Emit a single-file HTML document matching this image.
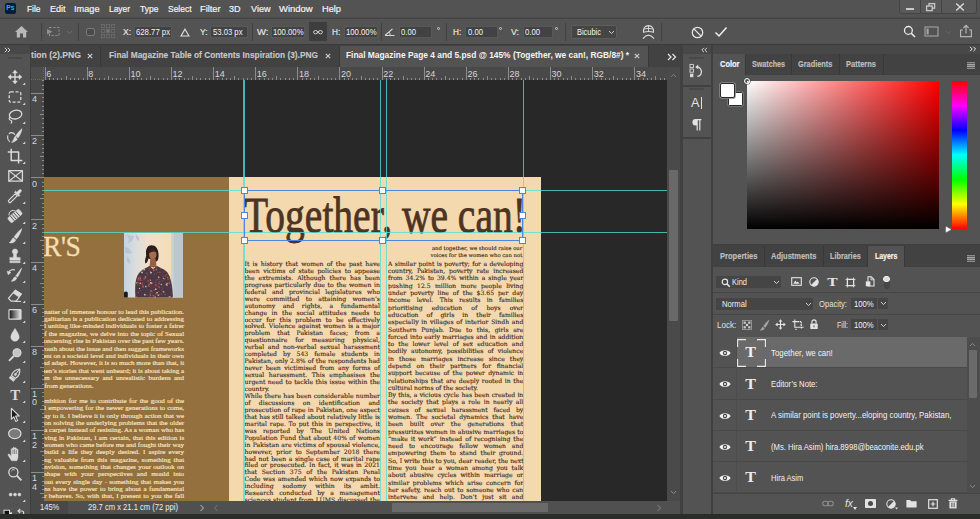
<!DOCTYPE html>
<html><head><meta charset="utf-8"><title>Photoshop</title>
<style>*{box-sizing:border-box;margin:0;padding:0}
html,body{width:980px;height:519px;overflow:hidden;background:#535353;font-family:"Liberation Sans",sans-serif;color:#e6e6e6}
.a{position:absolute}
#root{position:relative;width:980px;height:519px;overflow:hidden;background:#535353}
#canvas{left:44px;top:80px;width:623px;height:421px;background:#282828;overflow:hidden}
.g{position:absolute;background:rgba(78,224,218,0.78)}
.ser{font-family:"Liberation Serif",serif}
.bl{position:absolute;white-space:nowrap;font-family:"Liberation Serif",serif;font-weight:bold;text-align:justify;text-align-last:justify}
.hd{position:absolute;width:7px;height:7px;background:#fff;border:1px solid #4a86e8}
</style></head><body>
<div id="root">
<div class="a" style="left:0;top:0;width:980px;height:19px;background:#535353;border-bottom:1.2px solid #434343"></div><div class="a" style="left:0;top:16.6px;width:980px;height:1.2px;background:#4c4c4c"></div>
<div class="a" style="left:4.7px;top:3.4px;width:11.2px;height:10.6px;background:#001e36;border-radius:2.2px;font-size:6.8px;font-weight:bold;color:#31a8ff;line-height:10.6px;text-align:center;letter-spacing:-0.2px">Ps</div>
<span class="a" style="left:27px;top:2.65px;font-size:9.6px;line-height:12.5px;font-weight:normal;color:#f4f4f4;font-family:'Liberation Sans',sans-serif;white-space:nowrap;transform-origin:0 50%;transform:scaleX(0.873);-webkit-text-stroke:0.2px #f4f4f4;">File</span>
<span class="a" style="left:50px;top:2.65px;font-size:9.6px;line-height:12.5px;font-weight:normal;color:#f4f4f4;font-family:'Liberation Sans',sans-serif;white-space:nowrap;transform-origin:0 50%;transform:scaleX(0.938);-webkit-text-stroke:0.2px #f4f4f4;">Edit</span>
<span class="a" style="left:74px;top:2.65px;font-size:9.6px;line-height:12.5px;font-weight:normal;color:#f4f4f4;font-family:'Liberation Sans',sans-serif;white-space:nowrap;transform-origin:0 50%;transform:scaleX(0.956);-webkit-text-stroke:0.2px #f4f4f4;">Image</span>
<span class="a" style="left:109px;top:2.65px;font-size:9.6px;line-height:12.5px;font-weight:normal;color:#f4f4f4;font-family:'Liberation Sans',sans-serif;white-space:nowrap;transform-origin:0 50%;transform:scaleX(0.875);-webkit-text-stroke:0.2px #f4f4f4;">Layer</span>
<span class="a" style="left:139.5px;top:2.65px;font-size:9.6px;line-height:12.5px;font-weight:normal;color:#f4f4f4;font-family:'Liberation Sans',sans-serif;white-space:nowrap;transform-origin:0 50%;transform:scaleX(0.889);-webkit-text-stroke:0.2px #f4f4f4;">Type</span>
<span class="a" style="left:167.5px;top:2.65px;font-size:9.6px;line-height:12.5px;font-weight:normal;color:#f4f4f4;font-family:'Liberation Sans',sans-serif;white-space:nowrap;transform-origin:0 50%;transform:scaleX(0.881);-webkit-text-stroke:0.2px #f4f4f4;">Select</span>
<span class="a" style="left:200px;top:2.65px;font-size:9.6px;line-height:12.5px;font-weight:normal;color:#f4f4f4;font-family:'Liberation Sans',sans-serif;white-space:nowrap;transform-origin:0 50%;transform:scaleX(0.962);-webkit-text-stroke:0.2px #f4f4f4;">Filter</span>
<span class="a" style="left:229px;top:2.65px;font-size:9.6px;line-height:12.5px;font-weight:normal;color:#f4f4f4;font-family:'Liberation Sans',sans-serif;white-space:nowrap;transform-origin:0 50%;transform:scaleX(0.938);-webkit-text-stroke:0.2px #f4f4f4;">3D</span>
<span class="a" style="left:250.5px;top:2.65px;font-size:9.6px;line-height:12.5px;font-weight:normal;color:#f4f4f4;font-family:'Liberation Sans',sans-serif;white-space:nowrap;transform-origin:0 50%;transform:scaleX(0.946);-webkit-text-stroke:0.2px #f4f4f4;">View</span>
<span class="a" style="left:278.8px;top:2.65px;font-size:9.6px;line-height:12.5px;font-weight:normal;color:#f4f4f4;font-family:'Liberation Sans',sans-serif;white-space:nowrap;transform-origin:0 50%;transform:scaleX(0.988);-webkit-text-stroke:0.2px #f4f4f4;">Window</span>
<span class="a" style="left:321.5px;top:2.65px;font-size:9.6px;line-height:12.5px;font-weight:normal;color:#f4f4f4;font-family:'Liberation Sans',sans-serif;white-space:nowrap;transform-origin:0 50%;transform:scaleX(0.963);-webkit-text-stroke:0.2px #f4f4f4;">Help</span>
<div class="a" style="left:899px;top:-1px;width:78px;height:14.5px;background:#595959;border:1px solid #444;border-radius:0 0 3px 3px"></div>
<div class="a" style="left:920px;top:0;width:1px;height:13px;background:#444"></div><div class="a" style="left:941px;top:0;width:1px;height:13px;background:#444"></div>
<div class="a" style="left:906px;top:8px;width:8px;height:2.3px;background:#c9c9c9"></div>
<svg class="a" style="left:924px;top:1px" width="14" height="12" viewBox="0 0 14 12"><rect x="5" y="2.6" width="5.6" height="4.6" fill="none" stroke="#c9c9c9" stroke-width="1.3"/><rect x="2.6" y="5" width="5.6" height="4.6" fill="#595959" stroke="#c9c9c9" stroke-width="1.3"/></svg>
<svg class="a" style="left:954px;top:2px" width="12" height="10" viewBox="0 0 12 10"><path d="M2.2 1.6 L9.8 8.4 M9.8 1.6 L2.2 8.4" stroke="#dcdcdc" stroke-width="1.4" fill="none"/></svg>
<div class="a" style="left:0;top:19px;width:980px;height:26px;background:#535353;border-bottom:1.5px solid #3a3a3a"></div>
<svg class="a" style="left:14px;top:25px" width="15" height="14" viewBox="0 0 15 14"><path d="M7.5 1 L14 7 H12.2 V12.6 H9 V8.6 H6 V12.6 H2.8 V7 H1 Z" fill="#b9b9b9"/></svg>
<div class="a" style="left:41px;top:23px;width:1px;height:18px;background:#404040"></div>
<svg class="a" style="left:46px;top:26px" width="15" height="12" viewBox="0 0 15 12"><rect x="3.5" y="1.5" width="9.5" height="8" fill="none" stroke="#8f8f8f" stroke-width="1.1" stroke-dasharray="2.2 1.6"/><path d="M1 3 L6.5 5.7 L1 8.4 Z" fill="#8f8f8f"/></svg>
<svg class="a" style="left:66px;top:30px" width="7" height="5" viewBox="0 0 7 5"><path d="M1 1 L3.5 3.6 L6 1" fill="none" stroke="#6c6c6c" stroke-width="1"/></svg>
<div class="a" style="left:78px;top:23px;width:1px;height:18px;background:#404040"></div>
<div class="a" style="left:86px;top:27.5px;width:8.5px;height:8.5px;border:1px solid #7a7a7a;border-radius:2px;background:#4b4b4b"></div>
<svg class="a" style="left:100px;top:23px" width="17" height="17" viewBox="0 0 17 17"><rect x="1.5" y="1.5" width="3.2" height="3.2" fill="none" stroke="#6d6d6d" stroke-width="0.8"/><rect x="6.5" y="1.5" width="3.2" height="3.2" fill="none" stroke="#6d6d6d" stroke-width="0.8"/><rect x="11.5" y="1.5" width="3.2" height="3.2" fill="none" stroke="#6d6d6d" stroke-width="0.8"/><rect x="1.5" y="6.5" width="3.2" height="3.2" fill="none" stroke="#6d6d6d" stroke-width="0.8"/><rect x="6.5" y="6.5" width="3.2" height="3.2" fill="#777" stroke="#6d6d6d" stroke-width="0.8"/><rect x="11.5" y="6.5" width="3.2" height="3.2" fill="none" stroke="#6d6d6d" stroke-width="0.8"/><rect x="1.5" y="11.5" width="3.2" height="3.2" fill="none" stroke="#6d6d6d" stroke-width="0.8"/><rect x="6.5" y="11.5" width="3.2" height="3.2" fill="none" stroke="#6d6d6d" stroke-width="0.8"/><rect x="11.5" y="11.5" width="3.2" height="3.2" fill="none" stroke="#6d6d6d" stroke-width="0.8"/></svg>
<span class="a" style="left:122.8px;top:25.90px;font-size:9.4px;line-height:12.2px;font-weight:normal;color:#e4e4e4;font-family:'Liberation Sans',sans-serif;white-space:nowrap;transform-origin:0 50%;transform:scaleX(0.903);-webkit-text-stroke:0.18px #e4e4e4;">X:</span>
<div class="a" style="left:134px;top:26px;width:38px;height:12px;background:#424242;border:1px solid #585858"></div>
<span class="a" style="left:136.3px;top:26.10px;font-size:9.4px;line-height:12.2px;font-weight:normal;color:#f4f4f4;font-family:'Liberation Sans',sans-serif;white-space:nowrap;transform-origin:0 50%;transform:scaleX(0.826);">628.77 px</span>
<svg class="a" style="left:180px;top:27.5px" width="10" height="9" viewBox="0 0 10 9"><path d="M5 1.2 L9 8 H1 Z" fill="none" stroke="#e0e0e0" stroke-width="1.1"/></svg>
<span class="a" style="left:199.6px;top:25.90px;font-size:9.4px;line-height:12.2px;font-weight:normal;color:#e4e4e4;font-family:'Liberation Sans',sans-serif;white-space:nowrap;transform-origin:0 50%;transform:scaleX(0.911);-webkit-text-stroke:0.18px #e4e4e4;">Y:</span>
<div class="a" style="left:210px;top:26px;width:38px;height:12px;background:#424242;border:1px solid #585858"></div>
<span class="a" style="left:212.5px;top:26.10px;font-size:9.4px;line-height:12.2px;font-weight:normal;color:#f4f4f4;font-family:'Liberation Sans',sans-serif;white-space:nowrap;transform-origin:0 50%;transform:scaleX(0.820);">53.03 px</span>
<div class="a" style="left:252px;top:23px;width:1px;height:18px;background:#404040"></div>
<span class="a" style="left:256.8px;top:25.90px;font-size:9.4px;line-height:12.2px;font-weight:normal;color:#e4e4e4;font-family:'Liberation Sans',sans-serif;white-space:nowrap;transform-origin:0 50%;transform:scaleX(1.010);-webkit-text-stroke:0.18px #e4e4e4;">W:</span>
<div class="a" style="left:271px;top:26px;width:34px;height:12px;background:#424242;border:1px solid #585858"></div>
<span class="a" style="left:273.2px;top:26.10px;font-size:9.4px;line-height:12.2px;font-weight:normal;color:#f4f4f4;font-family:'Liberation Sans',sans-serif;white-space:nowrap;transform-origin:0 50%;transform:scaleX(0.824);">100.00%</span>
<div class="a" style="left:309px;top:22px;width:17.5px;height:19px;background:#3d3d3d"></div>
<svg class="a" style="left:311px;top:28px" width="14" height="8" viewBox="0 0 14 8"><ellipse cx="4.6" cy="4.2" rx="2" ry="1.7" fill="none" stroke="#cfcfcf" stroke-width="1"/><ellipse cx="9.4" cy="4.2" rx="2" ry="1.7" fill="none" stroke="#cfcfcf" stroke-width="1"/><path d="M5.8 4.2 H8.2" stroke="#cfcfcf" stroke-width="1"/></svg>
<span class="a" style="left:332px;top:25.90px;font-size:9.4px;line-height:12.2px;font-weight:normal;color:#e4e4e4;font-family:'Liberation Sans',sans-serif;white-space:nowrap;transform-origin:0 50%;transform:scaleX(0.875);-webkit-text-stroke:0.18px #e4e4e4;">H:</span>
<div class="a" style="left:343.5px;top:26px;width:34.0px;height:12px;background:#424242;border:1px solid #585858"></div>
<span class="a" style="left:346px;top:26.10px;font-size:9.4px;line-height:12.2px;font-weight:normal;color:#f4f4f4;font-family:'Liberation Sans',sans-serif;white-space:nowrap;transform-origin:0 50%;transform:scaleX(0.824);">100.00%</span>
<div class="a" style="left:381px;top:23px;width:1px;height:18px;background:#404040"></div>
<svg class="a" style="left:384px;top:27px" width="12" height="10" viewBox="0 0 12 10"><path d="M1 8.5 H10.5 M1 8.5 L8.5 1.8" fill="none" stroke="#d8d8d8" stroke-width="1.1"/><path d="M6.2 8.5 A5 5 0 0 0 4.9 5" fill="none" stroke="#d8d8d8" stroke-width="1"/></svg>
<div class="a" style="left:398.5px;top:26px;width:33.5px;height:12px;background:#424242;border:1px solid #585858"></div>
<span class="a" style="left:401px;top:26.10px;font-size:9.4px;line-height:12.2px;font-weight:normal;color:#f4f4f4;font-family:'Liberation Sans',sans-serif;white-space:nowrap;transform-origin:0 50%;transform:scaleX(0.822);">0.00</span>
<div class="a" style="left:436.5px;top:26.5px;width:3.4px;height:3.4px;border:0.8px solid #cfcfcf;border-radius:50%"></div>
<div class="a" style="left:446px;top:23px;width:1px;height:18px;background:#404040"></div>
<span class="a" style="left:453.3px;top:25.90px;font-size:9.4px;line-height:12.2px;font-weight:normal;color:#e4e4e4;font-family:'Liberation Sans',sans-serif;white-space:nowrap;transform-origin:0 50%;transform:scaleX(0.875);-webkit-text-stroke:0.18px #e4e4e4;">H:</span>
<div class="a" style="left:464.5px;top:26px;width:33.0px;height:12px;background:#424242;border:1px solid #585858"></div>
<span class="a" style="left:467.5px;top:26.10px;font-size:9.4px;line-height:12.2px;font-weight:normal;color:#f4f4f4;font-family:'Liberation Sans',sans-serif;white-space:nowrap;transform-origin:0 50%;transform:scaleX(0.822);">0.00</span>
<div class="a" style="left:499px;top:26.5px;width:3.4px;height:3.4px;border:0.8px solid #cfcfcf;border-radius:50%"></div>
<span class="a" style="left:511.2px;top:25.90px;font-size:9.4px;line-height:12.2px;font-weight:normal;color:#e4e4e4;font-family:'Liberation Sans',sans-serif;white-space:nowrap;transform-origin:0 50%;transform:scaleX(0.940);-webkit-text-stroke:0.18px #e4e4e4;">V:</span>
<div class="a" style="left:522.5px;top:26px;width:30.0px;height:12px;background:#424242;border:1px solid #585858"></div>
<span class="a" style="left:525px;top:26.10px;font-size:9.4px;line-height:12.2px;font-weight:normal;color:#f4f4f4;font-family:'Liberation Sans',sans-serif;white-space:nowrap;transform-origin:0 50%;transform:scaleX(0.822);">0.00</span>
<div class="a" style="left:555px;top:26.5px;width:3.4px;height:3.4px;border:0.8px solid #cfcfcf;border-radius:50%"></div>
<div class="a" style="left:565px;top:23px;width:1px;height:18px;background:#404040"></div>
<div class="a" style="left:571px;top:25.2px;width:46px;height:13.4px;background:#454545;border:1px solid #5c5c5c;border-radius:2px"></div>
<span class="a" style="left:576.5px;top:26.10px;font-size:9.4px;line-height:12.2px;font-weight:normal;color:#f4f4f4;font-family:'Liberation Sans',sans-serif;white-space:nowrap;transform-origin:0 50%;transform:scaleX(0.794);">Bicubic</span>
<svg class="a" style="left:608px;top:30px" width="7" height="5" viewBox="0 0 7 5"><path d="M1 1 L3.5 3.6 L6 1" fill="none" stroke="#cfcfcf" stroke-width="1"/></svg>
<svg class="a" style="left:641px;top:24px" width="15" height="16" viewBox="0 0 15 16"><path d="M2.6 8.2 C2 4.4 4 1.6 7.5 1.6 C11 1.6 13 4.4 12.4 8.2 Q7.5 6.8 2.6 8.2 Z" fill="none" stroke="#dcdcdc" stroke-width="1.1"/><path d="M7.5 1.8 V7.4 M2.8 5 Q7.5 3.8 12.2 5" fill="none" stroke="#dcdcdc" stroke-width="0.9"/><path d="M2 14.6 Q7.5 7.8 13 14.6" fill="none" stroke="#dcdcdc" stroke-width="1.2"/></svg>
<div class="a" style="left:661px;top:23px;width:1px;height:18px;background:#404040"></div>
<svg class="a" style="left:691px;top:25.5px" width="13" height="13" viewBox="0 0 13 13"><circle cx="6.5" cy="6.5" r="5.2" fill="none" stroke="#e6e6e6" stroke-width="1.3"/><path d="M2.9 2.9 L10.1 10.1" stroke="#e6e6e6" stroke-width="1.3"/></svg>
<svg class="a" style="left:714px;top:26px" width="14" height="12" viewBox="0 0 14 12"><path d="M1.5 6.5 L5 10 L12.5 1.5" fill="none" stroke="#f0f0f0" stroke-width="1.5"/></svg>
<svg class="a" style="left:903px;top:25px" width="13" height="13" viewBox="0 0 13 13"><circle cx="5.4" cy="5.4" r="3.9" fill="none" stroke="#ececec" stroke-width="1.3"/><path d="M8.3 8.3 L12 12" stroke="#ececec" stroke-width="1.6"/></svg>
<svg class="a" style="left:924px;top:26px" width="15" height="11" viewBox="0 0 15 11"><rect x="1" y="1" width="13" height="9" fill="none" stroke="#a4a4a4" stroke-width="1.1"/><rect x="2.5" y="2.6" width="2.2" height="5.8" fill="#a4a4a4"/></svg>
<svg class="a" style="left:945px;top:30px" width="7" height="5" viewBox="0 0 7 5"><path d="M1 1 L3.5 3.6 L6 1" fill="none" stroke="#656565" stroke-width="1"/></svg>
<svg class="a" style="left:959px;top:24px" width="14" height="14" viewBox="0 0 14 14"><path d="M4 6 H1.6 V12.6 H12.4 V6 H10" fill="none" stroke="#b4b4b4" stroke-width="1.2"/><path d="M7 9.5 V1.6 M4.4 4 L7 1.4 L9.6 4" fill="none" stroke="#b4b4b4" stroke-width="1.2"/></svg>
<div class="a" style="left:30px;top:45px;width:650px;height:21.5px;background:#424242"></div>
<div class="a" style="left:339px;top:45.5px;width:308.8px;height:21px;background:#535353"></div>
<div class="a" style="left:100px;top:45.5px;width:1px;height:21px;background:#383838"></div>
<div class="a" style="left:338.5px;top:45.5px;width:1px;height:21px;background:#383838"></div>
<div class="a" style="left:647.8px;top:45.5px;width:1px;height:21px;background:#383838"></div>
<span class="a" style="left:31px;top:49.25px;font-size:9.6px;line-height:12.5px;font-weight:bold;color:#c6c6c6;font-family:'Liberation Sans',sans-serif;white-space:nowrap;transform-origin:0 50%;transform:scaleX(0.902);-webkit-text-stroke:0.15px #c6c6c6;">tion (2).PNG</span>
<span class="a" style="left:109px;top:49.25px;font-size:9.6px;line-height:12.5px;font-weight:bold;color:#c6c6c6;font-family:'Liberation Sans',sans-serif;white-space:nowrap;transform-origin:0 50%;transform:scaleX(0.868);-webkit-text-stroke:0.15px #c6c6c6;">Final Magazine Table of Contents Inspiration (3).PNG</span>
<span class="a" style="left:346px;top:49.25px;font-size:9.6px;line-height:12.5px;font-weight:bold;color:#f4f4f4;font-family:'Liberation Sans',sans-serif;white-space:nowrap;transform-origin:0 50%;transform:scaleX(0.873);">Final Magazine Page 4 and 5.psd @ 145% (Together, we can!, RGB/8#) *</span>
<svg class="a" style="left:87px;top:53.2px" width="6" height="6" viewBox="0 0 6 6"><path d="M0.8 0.8 L5.2 5.2 M5.2 0.8 L0.8 5.2" stroke="#d0d0d0" stroke-width="1.1"/></svg>
<svg class="a" style="left:324.5px;top:53.2px" width="6" height="6" viewBox="0 0 6 6"><path d="M0.8 0.8 L5.2 5.2 M5.2 0.8 L0.8 5.2" stroke="#d0d0d0" stroke-width="1.1"/></svg>
<svg class="a" style="left:633.5px;top:53.2px" width="6" height="6" viewBox="0 0 6 6"><path d="M0.8 0.8 L5.2 5.2 M5.2 0.8 L0.8 5.2" stroke="#d0d0d0" stroke-width="1.1"/></svg>
<svg class="a" style="left:666.5px;top:52.5px" width="10" height="8" viewBox="0 0 10 8"><path d="M1 1 L4 4 L1 7 M5.5 1 L8.5 4 L5.5 7" fill="none" stroke="#e8e8e8" stroke-width="1.2"/></svg>
<div class="a" style="left:30px;top:66.5px;width:637px;height:13.5px;background:#494949;overflow:hidden">
<div class="a" style="left:14.60px;bottom:0;width:1px;height:13.5px;background:#8c8c8c"></div>
<div class="a" style="left:18.81px;bottom:0;width:1px;height:2.2px;background:#8c8c8c"></div>
<div class="a" style="left:23.02px;bottom:0;width:1px;height:2.2px;background:#8c8c8c"></div>
<div class="a" style="left:27.24px;bottom:0;width:1px;height:2.2px;background:#8c8c8c"></div>
<div class="a" style="left:31.45px;bottom:0;width:1px;height:2.2px;background:#8c8c8c"></div>
<div class="a" style="left:35.66px;bottom:0;width:1px;height:4px;background:#8c8c8c"></div>
<div class="a" style="left:39.87px;bottom:0;width:1px;height:2.2px;background:#8c8c8c"></div>
<div class="a" style="left:44.08px;bottom:0;width:1px;height:2.2px;background:#8c8c8c"></div>
<div class="a" style="left:48.30px;bottom:0;width:1px;height:2.2px;background:#8c8c8c"></div>
<div class="a" style="left:52.51px;bottom:0;width:1px;height:2.2px;background:#8c8c8c"></div>
<div class="a" style="left:56.72px;bottom:0;width:1px;height:13.5px;background:#8c8c8c"></div>
<div class="a" style="left:60.93px;bottom:0;width:1px;height:2.2px;background:#8c8c8c"></div>
<div class="a" style="left:65.14px;bottom:0;width:1px;height:2.2px;background:#8c8c8c"></div>
<div class="a" style="left:69.36px;bottom:0;width:1px;height:2.2px;background:#8c8c8c"></div>
<div class="a" style="left:73.57px;bottom:0;width:1px;height:2.2px;background:#8c8c8c"></div>
<div class="a" style="left:77.78px;bottom:0;width:1px;height:4px;background:#8c8c8c"></div>
<div class="a" style="left:81.99px;bottom:0;width:1px;height:2.2px;background:#8c8c8c"></div>
<div class="a" style="left:86.20px;bottom:0;width:1px;height:2.2px;background:#8c8c8c"></div>
<div class="a" style="left:90.42px;bottom:0;width:1px;height:2.2px;background:#8c8c8c"></div>
<div class="a" style="left:94.63px;bottom:0;width:1px;height:2.2px;background:#8c8c8c"></div>
<div class="a" style="left:98.84px;bottom:0;width:1px;height:13.5px;background:#8c8c8c"></div>
<div class="a" style="left:103.05px;bottom:0;width:1px;height:2.2px;background:#8c8c8c"></div>
<div class="a" style="left:107.26px;bottom:0;width:1px;height:2.2px;background:#8c8c8c"></div>
<div class="a" style="left:111.48px;bottom:0;width:1px;height:2.2px;background:#8c8c8c"></div>
<div class="a" style="left:115.69px;bottom:0;width:1px;height:2.2px;background:#8c8c8c"></div>
<div class="a" style="left:119.90px;bottom:0;width:1px;height:4px;background:#8c8c8c"></div>
<div class="a" style="left:124.11px;bottom:0;width:1px;height:2.2px;background:#8c8c8c"></div>
<div class="a" style="left:128.32px;bottom:0;width:1px;height:2.2px;background:#8c8c8c"></div>
<div class="a" style="left:132.54px;bottom:0;width:1px;height:2.2px;background:#8c8c8c"></div>
<div class="a" style="left:136.75px;bottom:0;width:1px;height:2.2px;background:#8c8c8c"></div>
<div class="a" style="left:140.96px;bottom:0;width:1px;height:13.5px;background:#8c8c8c"></div>
<div class="a" style="left:145.17px;bottom:0;width:1px;height:2.2px;background:#8c8c8c"></div>
<div class="a" style="left:149.38px;bottom:0;width:1px;height:2.2px;background:#8c8c8c"></div>
<div class="a" style="left:153.60px;bottom:0;width:1px;height:2.2px;background:#8c8c8c"></div>
<div class="a" style="left:157.81px;bottom:0;width:1px;height:2.2px;background:#8c8c8c"></div>
<div class="a" style="left:162.02px;bottom:0;width:1px;height:4px;background:#8c8c8c"></div>
<div class="a" style="left:166.23px;bottom:0;width:1px;height:2.2px;background:#8c8c8c"></div>
<div class="a" style="left:170.44px;bottom:0;width:1px;height:2.2px;background:#8c8c8c"></div>
<div class="a" style="left:174.66px;bottom:0;width:1px;height:2.2px;background:#8c8c8c"></div>
<div class="a" style="left:178.87px;bottom:0;width:1px;height:2.2px;background:#8c8c8c"></div>
<div class="a" style="left:183.08px;bottom:0;width:1px;height:13.5px;background:#8c8c8c"></div>
<div class="a" style="left:187.29px;bottom:0;width:1px;height:2.2px;background:#8c8c8c"></div>
<div class="a" style="left:191.50px;bottom:0;width:1px;height:2.2px;background:#8c8c8c"></div>
<div class="a" style="left:195.72px;bottom:0;width:1px;height:2.2px;background:#8c8c8c"></div>
<div class="a" style="left:199.93px;bottom:0;width:1px;height:2.2px;background:#8c8c8c"></div>
<div class="a" style="left:204.14px;bottom:0;width:1px;height:4px;background:#8c8c8c"></div>
<div class="a" style="left:208.35px;bottom:0;width:1px;height:2.2px;background:#8c8c8c"></div>
<div class="a" style="left:212.56px;bottom:0;width:1px;height:2.2px;background:#8c8c8c"></div>
<div class="a" style="left:216.78px;bottom:0;width:1px;height:2.2px;background:#8c8c8c"></div>
<div class="a" style="left:220.99px;bottom:0;width:1px;height:2.2px;background:#8c8c8c"></div>
<div class="a" style="left:225.20px;bottom:0;width:1px;height:13.5px;background:#8c8c8c"></div>
<div class="a" style="left:229.41px;bottom:0;width:1px;height:2.2px;background:#8c8c8c"></div>
<div class="a" style="left:233.62px;bottom:0;width:1px;height:2.2px;background:#8c8c8c"></div>
<div class="a" style="left:237.84px;bottom:0;width:1px;height:2.2px;background:#8c8c8c"></div>
<div class="a" style="left:242.05px;bottom:0;width:1px;height:2.2px;background:#8c8c8c"></div>
<div class="a" style="left:246.26px;bottom:0;width:1px;height:4px;background:#8c8c8c"></div>
<div class="a" style="left:250.47px;bottom:0;width:1px;height:2.2px;background:#8c8c8c"></div>
<div class="a" style="left:254.68px;bottom:0;width:1px;height:2.2px;background:#8c8c8c"></div>
<div class="a" style="left:258.90px;bottom:0;width:1px;height:2.2px;background:#8c8c8c"></div>
<div class="a" style="left:263.11px;bottom:0;width:1px;height:2.2px;background:#8c8c8c"></div>
<div class="a" style="left:267.32px;bottom:0;width:1px;height:13.5px;background:#8c8c8c"></div>
<div class="a" style="left:271.53px;bottom:0;width:1px;height:2.2px;background:#8c8c8c"></div>
<div class="a" style="left:275.74px;bottom:0;width:1px;height:2.2px;background:#8c8c8c"></div>
<div class="a" style="left:279.96px;bottom:0;width:1px;height:2.2px;background:#8c8c8c"></div>
<div class="a" style="left:284.17px;bottom:0;width:1px;height:2.2px;background:#8c8c8c"></div>
<div class="a" style="left:288.38px;bottom:0;width:1px;height:4px;background:#8c8c8c"></div>
<div class="a" style="left:292.59px;bottom:0;width:1px;height:2.2px;background:#8c8c8c"></div>
<div class="a" style="left:296.80px;bottom:0;width:1px;height:2.2px;background:#8c8c8c"></div>
<div class="a" style="left:301.02px;bottom:0;width:1px;height:2.2px;background:#8c8c8c"></div>
<div class="a" style="left:305.23px;bottom:0;width:1px;height:2.2px;background:#8c8c8c"></div>
<div class="a" style="left:309.44px;bottom:0;width:1px;height:13.5px;background:#8c8c8c"></div>
<div class="a" style="left:313.65px;bottom:0;width:1px;height:2.2px;background:#8c8c8c"></div>
<div class="a" style="left:317.86px;bottom:0;width:1px;height:2.2px;background:#8c8c8c"></div>
<div class="a" style="left:322.08px;bottom:0;width:1px;height:2.2px;background:#8c8c8c"></div>
<div class="a" style="left:326.29px;bottom:0;width:1px;height:2.2px;background:#8c8c8c"></div>
<div class="a" style="left:330.50px;bottom:0;width:1px;height:4px;background:#8c8c8c"></div>
<div class="a" style="left:334.71px;bottom:0;width:1px;height:2.2px;background:#8c8c8c"></div>
<div class="a" style="left:338.92px;bottom:0;width:1px;height:2.2px;background:#8c8c8c"></div>
<div class="a" style="left:343.14px;bottom:0;width:1px;height:2.2px;background:#8c8c8c"></div>
<div class="a" style="left:347.35px;bottom:0;width:1px;height:2.2px;background:#8c8c8c"></div>
<div class="a" style="left:351.56px;bottom:0;width:1px;height:13.5px;background:#8c8c8c"></div>
<div class="a" style="left:355.77px;bottom:0;width:1px;height:2.2px;background:#8c8c8c"></div>
<div class="a" style="left:359.98px;bottom:0;width:1px;height:2.2px;background:#8c8c8c"></div>
<div class="a" style="left:364.20px;bottom:0;width:1px;height:2.2px;background:#8c8c8c"></div>
<div class="a" style="left:368.41px;bottom:0;width:1px;height:2.2px;background:#8c8c8c"></div>
<div class="a" style="left:372.62px;bottom:0;width:1px;height:4px;background:#8c8c8c"></div>
<div class="a" style="left:376.83px;bottom:0;width:1px;height:2.2px;background:#8c8c8c"></div>
<div class="a" style="left:381.04px;bottom:0;width:1px;height:2.2px;background:#8c8c8c"></div>
<div class="a" style="left:385.26px;bottom:0;width:1px;height:2.2px;background:#8c8c8c"></div>
<div class="a" style="left:389.47px;bottom:0;width:1px;height:2.2px;background:#8c8c8c"></div>
<div class="a" style="left:393.68px;bottom:0;width:1px;height:13.5px;background:#8c8c8c"></div>
<div class="a" style="left:397.89px;bottom:0;width:1px;height:2.2px;background:#8c8c8c"></div>
<div class="a" style="left:402.10px;bottom:0;width:1px;height:2.2px;background:#8c8c8c"></div>
<div class="a" style="left:406.32px;bottom:0;width:1px;height:2.2px;background:#8c8c8c"></div>
<div class="a" style="left:410.53px;bottom:0;width:1px;height:2.2px;background:#8c8c8c"></div>
<div class="a" style="left:414.74px;bottom:0;width:1px;height:4px;background:#8c8c8c"></div>
<div class="a" style="left:418.95px;bottom:0;width:1px;height:2.2px;background:#8c8c8c"></div>
<div class="a" style="left:423.16px;bottom:0;width:1px;height:2.2px;background:#8c8c8c"></div>
<div class="a" style="left:427.38px;bottom:0;width:1px;height:2.2px;background:#8c8c8c"></div>
<div class="a" style="left:431.59px;bottom:0;width:1px;height:2.2px;background:#8c8c8c"></div>
<div class="a" style="left:435.80px;bottom:0;width:1px;height:13.5px;background:#8c8c8c"></div>
<div class="a" style="left:440.01px;bottom:0;width:1px;height:2.2px;background:#8c8c8c"></div>
<div class="a" style="left:444.22px;bottom:0;width:1px;height:2.2px;background:#8c8c8c"></div>
<div class="a" style="left:448.44px;bottom:0;width:1px;height:2.2px;background:#8c8c8c"></div>
<div class="a" style="left:452.65px;bottom:0;width:1px;height:2.2px;background:#8c8c8c"></div>
<div class="a" style="left:456.86px;bottom:0;width:1px;height:4px;background:#8c8c8c"></div>
<div class="a" style="left:461.07px;bottom:0;width:1px;height:2.2px;background:#8c8c8c"></div>
<div class="a" style="left:465.28px;bottom:0;width:1px;height:2.2px;background:#8c8c8c"></div>
<div class="a" style="left:469.50px;bottom:0;width:1px;height:2.2px;background:#8c8c8c"></div>
<div class="a" style="left:473.71px;bottom:0;width:1px;height:2.2px;background:#8c8c8c"></div>
<div class="a" style="left:477.92px;bottom:0;width:1px;height:13.5px;background:#8c8c8c"></div>
<div class="a" style="left:482.13px;bottom:0;width:1px;height:2.2px;background:#8c8c8c"></div>
<div class="a" style="left:486.34px;bottom:0;width:1px;height:2.2px;background:#8c8c8c"></div>
<div class="a" style="left:490.56px;bottom:0;width:1px;height:2.2px;background:#8c8c8c"></div>
<div class="a" style="left:494.77px;bottom:0;width:1px;height:2.2px;background:#8c8c8c"></div>
<div class="a" style="left:498.98px;bottom:0;width:1px;height:4px;background:#8c8c8c"></div>
<div class="a" style="left:503.19px;bottom:0;width:1px;height:2.2px;background:#8c8c8c"></div>
<div class="a" style="left:507.40px;bottom:0;width:1px;height:2.2px;background:#8c8c8c"></div>
<div class="a" style="left:511.62px;bottom:0;width:1px;height:2.2px;background:#8c8c8c"></div>
<div class="a" style="left:515.83px;bottom:0;width:1px;height:2.2px;background:#8c8c8c"></div>
<div class="a" style="left:520.04px;bottom:0;width:1px;height:13.5px;background:#8c8c8c"></div>
<div class="a" style="left:524.25px;bottom:0;width:1px;height:2.2px;background:#8c8c8c"></div>
<div class="a" style="left:528.46px;bottom:0;width:1px;height:2.2px;background:#8c8c8c"></div>
<div class="a" style="left:532.68px;bottom:0;width:1px;height:2.2px;background:#8c8c8c"></div>
<div class="a" style="left:536.89px;bottom:0;width:1px;height:2.2px;background:#8c8c8c"></div>
<div class="a" style="left:541.10px;bottom:0;width:1px;height:4px;background:#8c8c8c"></div>
<div class="a" style="left:545.31px;bottom:0;width:1px;height:2.2px;background:#8c8c8c"></div>
<div class="a" style="left:549.52px;bottom:0;width:1px;height:2.2px;background:#8c8c8c"></div>
<div class="a" style="left:553.74px;bottom:0;width:1px;height:2.2px;background:#8c8c8c"></div>
<div class="a" style="left:557.95px;bottom:0;width:1px;height:2.2px;background:#8c8c8c"></div>
<div class="a" style="left:562.16px;bottom:0;width:1px;height:13.5px;background:#8c8c8c"></div>
<div class="a" style="left:566.37px;bottom:0;width:1px;height:2.2px;background:#8c8c8c"></div>
<div class="a" style="left:570.58px;bottom:0;width:1px;height:2.2px;background:#8c8c8c"></div>
<div class="a" style="left:574.80px;bottom:0;width:1px;height:2.2px;background:#8c8c8c"></div>
<div class="a" style="left:579.01px;bottom:0;width:1px;height:2.2px;background:#8c8c8c"></div>
<div class="a" style="left:583.22px;bottom:0;width:1px;height:4px;background:#8c8c8c"></div>
<div class="a" style="left:587.43px;bottom:0;width:1px;height:2.2px;background:#8c8c8c"></div>
<div class="a" style="left:591.64px;bottom:0;width:1px;height:2.2px;background:#8c8c8c"></div>
<div class="a" style="left:595.86px;bottom:0;width:1px;height:2.2px;background:#8c8c8c"></div>
<div class="a" style="left:600.07px;bottom:0;width:1px;height:2.2px;background:#8c8c8c"></div>
<div class="a" style="left:604.28px;bottom:0;width:1px;height:13.5px;background:#8c8c8c"></div>
<div class="a" style="left:608.49px;bottom:0;width:1px;height:2.2px;background:#8c8c8c"></div>
<div class="a" style="left:612.70px;bottom:0;width:1px;height:2.2px;background:#8c8c8c"></div>
<div class="a" style="left:616.92px;bottom:0;width:1px;height:2.2px;background:#8c8c8c"></div>
<div class="a" style="left:621.13px;bottom:0;width:1px;height:2.2px;background:#8c8c8c"></div>
<div class="a" style="left:625.34px;bottom:0;width:1px;height:4px;background:#8c8c8c"></div>
<div class="a" style="left:629.55px;bottom:0;width:1px;height:2.2px;background:#8c8c8c"></div>
<div class="a" style="left:633.76px;bottom:0;width:1px;height:2.2px;background:#8c8c8c"></div>
</div>
<span class="a" style="left:46.2px;top:68.85px;font-size:9.0px;line-height:11.7px;font-weight:normal;color:#d6d6d6;font-family:'Liberation Sans',sans-serif;white-space:nowrap;transform-origin:0 50%;transform:scaleX(1.000);">6</span>
<span class="a" style="left:88.3px;top:68.85px;font-size:9.0px;line-height:11.7px;font-weight:normal;color:#d6d6d6;font-family:'Liberation Sans',sans-serif;white-space:nowrap;transform-origin:0 50%;transform:scaleX(1.000);">8</span>
<span class="a" style="left:130.4px;top:68.85px;font-size:9.0px;line-height:11.7px;font-weight:normal;color:#d6d6d6;font-family:'Liberation Sans',sans-serif;white-space:nowrap;transform-origin:0 50%;transform:scaleX(1.000);">10</span>
<span class="a" style="left:172.6px;top:68.85px;font-size:9.0px;line-height:11.7px;font-weight:normal;color:#d6d6d6;font-family:'Liberation Sans',sans-serif;white-space:nowrap;transform-origin:0 50%;transform:scaleX(1.000);">12</span>
<span class="a" style="left:214.7px;top:68.85px;font-size:9.0px;line-height:11.7px;font-weight:normal;color:#d6d6d6;font-family:'Liberation Sans',sans-serif;white-space:nowrap;transform-origin:0 50%;transform:scaleX(1.000);">14</span>
<span class="a" style="left:256.8px;top:68.85px;font-size:9.0px;line-height:11.7px;font-weight:normal;color:#d6d6d6;font-family:'Liberation Sans',sans-serif;white-space:nowrap;transform-origin:0 50%;transform:scaleX(1.000);">16</span>
<span class="a" style="left:298.9px;top:68.85px;font-size:9.0px;line-height:11.7px;font-weight:normal;color:#d6d6d6;font-family:'Liberation Sans',sans-serif;white-space:nowrap;transform-origin:0 50%;transform:scaleX(1.000);">18</span>
<span class="a" style="left:341.0px;top:68.85px;font-size:9.0px;line-height:11.7px;font-weight:normal;color:#d6d6d6;font-family:'Liberation Sans',sans-serif;white-space:nowrap;transform-origin:0 50%;transform:scaleX(1.000);">20</span>
<span class="a" style="left:383.2px;top:68.85px;font-size:9.0px;line-height:11.7px;font-weight:normal;color:#d6d6d6;font-family:'Liberation Sans',sans-serif;white-space:nowrap;transform-origin:0 50%;transform:scaleX(1.000);">22</span>
<span class="a" style="left:425.3px;top:68.85px;font-size:9.0px;line-height:11.7px;font-weight:normal;color:#d6d6d6;font-family:'Liberation Sans',sans-serif;white-space:nowrap;transform-origin:0 50%;transform:scaleX(1.000);">24</span>
<span class="a" style="left:467.4px;top:68.85px;font-size:9.0px;line-height:11.7px;font-weight:normal;color:#d6d6d6;font-family:'Liberation Sans',sans-serif;white-space:nowrap;transform-origin:0 50%;transform:scaleX(1.000);">26</span>
<span class="a" style="left:509.5px;top:68.85px;font-size:9.0px;line-height:11.7px;font-weight:normal;color:#d6d6d6;font-family:'Liberation Sans',sans-serif;white-space:nowrap;transform-origin:0 50%;transform:scaleX(1.000);">28</span>
<span class="a" style="left:551.6px;top:68.85px;font-size:9.0px;line-height:11.7px;font-weight:normal;color:#d6d6d6;font-family:'Liberation Sans',sans-serif;white-space:nowrap;transform-origin:0 50%;transform:scaleX(1.000);">30</span>
<span class="a" style="left:593.8px;top:68.85px;font-size:9.0px;line-height:11.7px;font-weight:normal;color:#d6d6d6;font-family:'Liberation Sans',sans-serif;white-space:nowrap;transform-origin:0 50%;transform:scaleX(1.000);">32</span>
<span class="a" style="left:635.9px;top:68.85px;font-size:9.0px;line-height:11.7px;font-weight:normal;color:#d6d6d6;font-family:'Liberation Sans',sans-serif;white-space:nowrap;transform-origin:0 50%;transform:scaleX(1.000);">34</span>
<div class="a" style="left:30.5px;top:66.5px;width:13.5px;height:13.5px;background:#4d4d4d;border-right:1px dotted #6a6a6a;border-bottom:1px dotted #6a6a6a"></div>
<div class="a" style="left:30.5px;top:80px;width:13.5px;height:421px;background:#494949;overflow:hidden">
<div class="a" style="right:0;top:0.42px;height:1px;width:2.2px;background:#8c8c8c"></div>
<div class="a" style="right:0;top:4.64px;height:1px;width:2.2px;background:#8c8c8c"></div>
<div class="a" style="right:0;top:8.85px;height:1px;width:2.2px;background:#8c8c8c"></div>
<div class="a" style="right:0;top:13.06px;height:1px;width:13.5px;background:#8c8c8c"></div>
<div class="a" style="right:0;top:17.27px;height:1px;width:2.2px;background:#8c8c8c"></div>
<div class="a" style="right:0;top:21.48px;height:1px;width:2.2px;background:#8c8c8c"></div>
<div class="a" style="right:0;top:25.70px;height:1px;width:2.2px;background:#8c8c8c"></div>
<div class="a" style="right:0;top:29.91px;height:1px;width:2.2px;background:#8c8c8c"></div>
<div class="a" style="right:0;top:34.12px;height:1px;width:4px;background:#8c8c8c"></div>
<div class="a" style="right:0;top:38.33px;height:1px;width:2.2px;background:#8c8c8c"></div>
<div class="a" style="right:0;top:42.54px;height:1px;width:2.2px;background:#8c8c8c"></div>
<div class="a" style="right:0;top:46.76px;height:1px;width:2.2px;background:#8c8c8c"></div>
<div class="a" style="right:0;top:50.97px;height:1px;width:2.2px;background:#8c8c8c"></div>
<div class="a" style="right:0;top:55.18px;height:1px;width:13.5px;background:#8c8c8c"></div>
<div class="a" style="right:0;top:59.39px;height:1px;width:2.2px;background:#8c8c8c"></div>
<div class="a" style="right:0;top:63.60px;height:1px;width:2.2px;background:#8c8c8c"></div>
<div class="a" style="right:0;top:67.82px;height:1px;width:2.2px;background:#8c8c8c"></div>
<div class="a" style="right:0;top:72.03px;height:1px;width:2.2px;background:#8c8c8c"></div>
<div class="a" style="right:0;top:76.24px;height:1px;width:4px;background:#8c8c8c"></div>
<div class="a" style="right:0;top:80.45px;height:1px;width:2.2px;background:#8c8c8c"></div>
<div class="a" style="right:0;top:84.66px;height:1px;width:2.2px;background:#8c8c8c"></div>
<div class="a" style="right:0;top:88.88px;height:1px;width:2.2px;background:#8c8c8c"></div>
<div class="a" style="right:0;top:93.09px;height:1px;width:2.2px;background:#8c8c8c"></div>
<div class="a" style="right:0;top:97.30px;height:1px;width:13.5px;background:#8c8c8c"></div>
<div class="a" style="right:0;top:101.51px;height:1px;width:2.2px;background:#8c8c8c"></div>
<div class="a" style="right:0;top:105.72px;height:1px;width:2.2px;background:#8c8c8c"></div>
<div class="a" style="right:0;top:109.94px;height:1px;width:2.2px;background:#8c8c8c"></div>
<div class="a" style="right:0;top:114.15px;height:1px;width:2.2px;background:#8c8c8c"></div>
<div class="a" style="right:0;top:118.36px;height:1px;width:4px;background:#8c8c8c"></div>
<div class="a" style="right:0;top:122.57px;height:1px;width:2.2px;background:#8c8c8c"></div>
<div class="a" style="right:0;top:126.78px;height:1px;width:2.2px;background:#8c8c8c"></div>
<div class="a" style="right:0;top:131.00px;height:1px;width:2.2px;background:#8c8c8c"></div>
<div class="a" style="right:0;top:135.21px;height:1px;width:2.2px;background:#8c8c8c"></div>
<div class="a" style="right:0;top:139.42px;height:1px;width:13.5px;background:#8c8c8c"></div>
<div class="a" style="right:0;top:143.63px;height:1px;width:2.2px;background:#8c8c8c"></div>
<div class="a" style="right:0;top:147.84px;height:1px;width:2.2px;background:#8c8c8c"></div>
<div class="a" style="right:0;top:152.06px;height:1px;width:2.2px;background:#8c8c8c"></div>
<div class="a" style="right:0;top:156.27px;height:1px;width:2.2px;background:#8c8c8c"></div>
<div class="a" style="right:0;top:160.48px;height:1px;width:4px;background:#8c8c8c"></div>
<div class="a" style="right:0;top:164.69px;height:1px;width:2.2px;background:#8c8c8c"></div>
<div class="a" style="right:0;top:168.90px;height:1px;width:2.2px;background:#8c8c8c"></div>
<div class="a" style="right:0;top:173.12px;height:1px;width:2.2px;background:#8c8c8c"></div>
<div class="a" style="right:0;top:177.33px;height:1px;width:2.2px;background:#8c8c8c"></div>
<div class="a" style="right:0;top:181.54px;height:1px;width:13.5px;background:#8c8c8c"></div>
<div class="a" style="right:0;top:185.75px;height:1px;width:2.2px;background:#8c8c8c"></div>
<div class="a" style="right:0;top:189.96px;height:1px;width:2.2px;background:#8c8c8c"></div>
<div class="a" style="right:0;top:194.18px;height:1px;width:2.2px;background:#8c8c8c"></div>
<div class="a" style="right:0;top:198.39px;height:1px;width:2.2px;background:#8c8c8c"></div>
<div class="a" style="right:0;top:202.60px;height:1px;width:4px;background:#8c8c8c"></div>
<div class="a" style="right:0;top:206.81px;height:1px;width:2.2px;background:#8c8c8c"></div>
<div class="a" style="right:0;top:211.02px;height:1px;width:2.2px;background:#8c8c8c"></div>
<div class="a" style="right:0;top:215.24px;height:1px;width:2.2px;background:#8c8c8c"></div>
<div class="a" style="right:0;top:219.45px;height:1px;width:2.2px;background:#8c8c8c"></div>
<div class="a" style="right:0;top:223.66px;height:1px;width:13.5px;background:#8c8c8c"></div>
<div class="a" style="right:0;top:227.87px;height:1px;width:2.2px;background:#8c8c8c"></div>
<div class="a" style="right:0;top:232.08px;height:1px;width:2.2px;background:#8c8c8c"></div>
<div class="a" style="right:0;top:236.30px;height:1px;width:2.2px;background:#8c8c8c"></div>
<div class="a" style="right:0;top:240.51px;height:1px;width:2.2px;background:#8c8c8c"></div>
<div class="a" style="right:0;top:244.72px;height:1px;width:4px;background:#8c8c8c"></div>
<div class="a" style="right:0;top:248.93px;height:1px;width:2.2px;background:#8c8c8c"></div>
<div class="a" style="right:0;top:253.14px;height:1px;width:2.2px;background:#8c8c8c"></div>
<div class="a" style="right:0;top:257.36px;height:1px;width:2.2px;background:#8c8c8c"></div>
<div class="a" style="right:0;top:261.57px;height:1px;width:2.2px;background:#8c8c8c"></div>
<div class="a" style="right:0;top:265.78px;height:1px;width:13.5px;background:#8c8c8c"></div>
<div class="a" style="right:0;top:269.99px;height:1px;width:2.2px;background:#8c8c8c"></div>
<div class="a" style="right:0;top:274.20px;height:1px;width:2.2px;background:#8c8c8c"></div>
<div class="a" style="right:0;top:278.42px;height:1px;width:2.2px;background:#8c8c8c"></div>
<div class="a" style="right:0;top:282.63px;height:1px;width:2.2px;background:#8c8c8c"></div>
<div class="a" style="right:0;top:286.84px;height:1px;width:4px;background:#8c8c8c"></div>
<div class="a" style="right:0;top:291.05px;height:1px;width:2.2px;background:#8c8c8c"></div>
<div class="a" style="right:0;top:295.26px;height:1px;width:2.2px;background:#8c8c8c"></div>
<div class="a" style="right:0;top:299.48px;height:1px;width:2.2px;background:#8c8c8c"></div>
<div class="a" style="right:0;top:303.69px;height:1px;width:2.2px;background:#8c8c8c"></div>
<div class="a" style="right:0;top:307.90px;height:1px;width:13.5px;background:#8c8c8c"></div>
<div class="a" style="right:0;top:312.11px;height:1px;width:2.2px;background:#8c8c8c"></div>
<div class="a" style="right:0;top:316.32px;height:1px;width:2.2px;background:#8c8c8c"></div>
<div class="a" style="right:0;top:320.54px;height:1px;width:2.2px;background:#8c8c8c"></div>
<div class="a" style="right:0;top:324.75px;height:1px;width:2.2px;background:#8c8c8c"></div>
<div class="a" style="right:0;top:328.96px;height:1px;width:4px;background:#8c8c8c"></div>
<div class="a" style="right:0;top:333.17px;height:1px;width:2.2px;background:#8c8c8c"></div>
<div class="a" style="right:0;top:337.38px;height:1px;width:2.2px;background:#8c8c8c"></div>
<div class="a" style="right:0;top:341.60px;height:1px;width:2.2px;background:#8c8c8c"></div>
<div class="a" style="right:0;top:345.81px;height:1px;width:2.2px;background:#8c8c8c"></div>
<div class="a" style="right:0;top:350.02px;height:1px;width:13.5px;background:#8c8c8c"></div>
<div class="a" style="right:0;top:354.23px;height:1px;width:2.2px;background:#8c8c8c"></div>
<div class="a" style="right:0;top:358.44px;height:1px;width:2.2px;background:#8c8c8c"></div>
<div class="a" style="right:0;top:362.66px;height:1px;width:2.2px;background:#8c8c8c"></div>
<div class="a" style="right:0;top:366.87px;height:1px;width:2.2px;background:#8c8c8c"></div>
<div class="a" style="right:0;top:371.08px;height:1px;width:4px;background:#8c8c8c"></div>
<div class="a" style="right:0;top:375.29px;height:1px;width:2.2px;background:#8c8c8c"></div>
<div class="a" style="right:0;top:379.50px;height:1px;width:2.2px;background:#8c8c8c"></div>
<div class="a" style="right:0;top:383.72px;height:1px;width:2.2px;background:#8c8c8c"></div>
<div class="a" style="right:0;top:387.93px;height:1px;width:2.2px;background:#8c8c8c"></div>
<div class="a" style="right:0;top:392.14px;height:1px;width:13.5px;background:#8c8c8c"></div>
<div class="a" style="right:0;top:396.35px;height:1px;width:2.2px;background:#8c8c8c"></div>
<div class="a" style="right:0;top:400.56px;height:1px;width:2.2px;background:#8c8c8c"></div>
<div class="a" style="right:0;top:404.78px;height:1px;width:2.2px;background:#8c8c8c"></div>
<div class="a" style="right:0;top:408.99px;height:1px;width:2.2px;background:#8c8c8c"></div>
<div class="a" style="right:0;top:413.20px;height:1px;width:4px;background:#8c8c8c"></div>
<div class="a" style="right:0;top:417.41px;height:1px;width:2.2px;background:#8c8c8c"></div>
</div>
<span class="a" style="left:32px;top:94.35px;font-size:9.0px;line-height:11.7px;font-weight:normal;color:#d6d6d6;font-family:'Liberation Sans',sans-serif;white-space:nowrap;transform-origin:0 50%;transform:scaleX(1.000);">4</span>
<span class="a" style="left:32px;top:136.45px;font-size:9.0px;line-height:11.7px;font-weight:normal;color:#d6d6d6;font-family:'Liberation Sans',sans-serif;white-space:nowrap;transform-origin:0 50%;transform:scaleX(1.000);">2</span>
<span class="a" style="left:32px;top:178.55px;font-size:9.0px;line-height:11.7px;font-weight:normal;color:#d6d6d6;font-family:'Liberation Sans',sans-serif;white-space:nowrap;transform-origin:0 50%;transform:scaleX(1.000);">0</span>
<span class="a" style="left:32px;top:220.65px;font-size:9.0px;line-height:11.7px;font-weight:normal;color:#d6d6d6;font-family:'Liberation Sans',sans-serif;white-space:nowrap;transform-origin:0 50%;transform:scaleX(1.000);">2</span>
<span class="a" style="left:32px;top:262.75px;font-size:9.0px;line-height:11.7px;font-weight:normal;color:#d6d6d6;font-family:'Liberation Sans',sans-serif;white-space:nowrap;transform-origin:0 50%;transform:scaleX(1.000);">4</span>
<span class="a" style="left:32px;top:304.95px;font-size:9.0px;line-height:11.7px;font-weight:normal;color:#d6d6d6;font-family:'Liberation Sans',sans-serif;white-space:nowrap;transform-origin:0 50%;transform:scaleX(1.000);">6</span>
<span class="a" style="left:32px;top:347.05px;font-size:9.0px;line-height:11.7px;font-weight:normal;color:#d6d6d6;font-family:'Liberation Sans',sans-serif;white-space:nowrap;transform-origin:0 50%;transform:scaleX(1.000);">8</span>
<span class="a" style="left:32px;top:389.15px;font-size:9.0px;line-height:11.7px;font-weight:normal;color:#d6d6d6;font-family:'Liberation Sans',sans-serif;white-space:nowrap;transform-origin:0 50%;transform:scaleX(1.000);">1</span>
<span class="a" style="left:32px;top:397.45px;font-size:9.0px;line-height:11.7px;font-weight:normal;color:#d6d6d6;font-family:'Liberation Sans',sans-serif;white-space:nowrap;transform-origin:0 50%;transform:scaleX(1.000);">0</span>
<span class="a" style="left:32px;top:431.25px;font-size:9.0px;line-height:11.7px;font-weight:normal;color:#d6d6d6;font-family:'Liberation Sans',sans-serif;white-space:nowrap;transform-origin:0 50%;transform:scaleX(1.000);">1</span>
<span class="a" style="left:32px;top:439.55px;font-size:9.0px;line-height:11.7px;font-weight:normal;color:#d6d6d6;font-family:'Liberation Sans',sans-serif;white-space:nowrap;transform-origin:0 50%;transform:scaleX(1.000);">2</span>
<span class="a" style="left:32px;top:473.35px;font-size:9.0px;line-height:11.7px;font-weight:normal;color:#d6d6d6;font-family:'Liberation Sans',sans-serif;white-space:nowrap;transform-origin:0 50%;transform:scaleX(1.000);">1</span>
<span class="a" style="left:32px;top:481.65px;font-size:9.0px;line-height:11.7px;font-weight:normal;color:#d6d6d6;font-family:'Liberation Sans',sans-serif;white-space:nowrap;transform-origin:0 50%;transform:scaleX(1.000);">4</span>
<div id="canvas" class="a">
<div class="a" style="left:0;top:96.6px;width:185.3px;height:330px;background:#94703f"></div>
<div class="a" style="left:185.3px;top:96.6px;width:311.7px;height:330px;background:#f5d9ae"></div>
<div class="a ser" style="left:-1px;top:150px;font-size:30px;color:#f5dfb2;line-height:32px;letter-spacing:-0.5px;white-space:nowrap;transform-origin:0 0;transform:scaleX(0.92);-webkit-text-stroke:0.3px #f5dfb2">R&#39;S</div>
<svg class="a" style="left:79.9px;top:153px" width="59.3" height="64.5" viewBox="0 0 59.3 64.5"><defs><linearGradient id="pbg" x1="0" x2="1" y1="0" y2="0"><stop offset="0" stop-color="#c6d2df"/><stop offset="0.22" stop-color="#dcdedc"/><stop offset="0.42" stop-color="#f0e0c9"/><stop offset="0.8" stop-color="#f6dcb6"/></linearGradient><clipPath id="bodyc"><path d="M11.5 64.5 C10.5 50 11.5 41 19 36.5 L25.5 33 L33 33 L40 36.5 C46.5 40 48.8 52 48.8 64.5 Z"/></clipPath></defs><rect width="59.3" height="64.5" fill="url(#pbg)"/><rect x="47" y="0" width="12.3" height="64.5" fill="#bcc7cf"/><rect x="47" y="0" width="2.6" height="64.5" fill="#ccd3d8"/><path d="M2 2 Q6 6 4 10 Q9 9 10 3 Z M1 14 Q6 15 8 20 Q3 22 1 19 Z M12 1 Q16 4 15 8 Q11 6 12 1 Z M3 24 Q7 26 6 31 Q2 29 3 24 Z" fill="#aabdd1" opacity="0.65"/><path d="M27.6 12.2 C22.6 12.2 21.4 17.6 22.2 22.4 C21.4 25.6 20.4 28.6 21.4 30.6 C23.4 30 24 27.4 24.4 25.6 L32.6 28.4 C34 27.4 35 25 34.4 20 C34 15.6 31.6 12.2 27.6 12.2 Z" fill="#2a1d1b"/><ellipse cx="28.8" cy="21.6" rx="3.7" ry="4.9" fill="#a66c4d"/><path d="M25 20 C25.6 16.8 29.8 15.6 32.6 19 C30 18 27.4 18.4 25 20 Z" fill="#2a1d1b"/><path d="M26.4 25.6 H31.6 L32.6 34 H25.4 Z" fill="#99603f"/><path d="M11.5 64.5 C10.5 50 11.5 41 19 36.5 L25.5 33 L29 36 L33 33 L40 36.5 C46.5 40 48.8 52 48.8 64.5 Z" fill="#4a3846"/><g clip-path="url(#bodyc)"><circle cx="28.2" cy="50.6" r="0.68" fill="#6e3a48"/><circle cx="43.5" cy="39.0" r="0.76" fill="#6e3a48"/><circle cx="41.1" cy="36.0" r="0.52" fill="#d8c7b0"/><circle cx="31.5" cy="61.0" r="0.75" fill="#a8483c"/><circle cx="26.1" cy="47.3" r="0.76" fill="#c9b49c"/><circle cx="42.6" cy="35.0" r="0.55" fill="#a8483c"/><circle cx="20.2" cy="33.9" r="0.61" fill="#6e3a48"/><circle cx="33.5" cy="39.2" r="0.77" fill="#8c3f3a"/><circle cx="30.0" cy="53.9" r="0.78" fill="#6e3a48"/><circle cx="26.5" cy="50.4" r="0.80" fill="#b9604a"/><circle cx="23.0" cy="40.2" r="0.46" fill="#d8c7b0"/><circle cx="32.4" cy="36.4" r="0.87" fill="#b9604a"/><circle cx="25.7" cy="63.2" r="0.56" fill="#a8483c"/><circle cx="46.2" cy="34.6" r="0.94" fill="#b4523f"/><circle cx="26.1" cy="35.3" r="0.84" fill="#8c3f3a"/><circle cx="21.3" cy="35.7" r="0.46" fill="#9a4a4a"/><circle cx="26.6" cy="62.1" r="0.57" fill="#c9b49c"/><circle cx="14.8" cy="34.9" r="0.54" fill="#6e3a48"/><circle cx="32.3" cy="47.1" r="0.94" fill="#8c3f3a"/><circle cx="40.2" cy="46.2" r="0.51" fill="#b4523f"/><circle cx="27.0" cy="39.7" r="0.88" fill="#d8c7b0"/><circle cx="48.0" cy="51.7" r="0.56" fill="#a8483c"/><circle cx="26.0" cy="59.9" r="0.47" fill="#b9604a"/><circle cx="16.6" cy="46.9" r="0.84" fill="#a8483c"/><circle cx="23.5" cy="42.3" r="0.49" fill="#b9604a"/><circle cx="18.9" cy="53.1" r="0.75" fill="#a8483c"/><circle cx="25.1" cy="47.3" r="0.87" fill="#6e3a48"/><circle cx="16.2" cy="45.2" r="0.61" fill="#c9b49c"/><circle cx="19.7" cy="52.2" r="0.53" fill="#8c3f3a"/><circle cx="34.9" cy="50.4" r="0.89" fill="#b4523f"/><circle cx="33.9" cy="46.3" r="0.50" fill="#b9604a"/><circle cx="30.5" cy="41.0" r="0.58" fill="#b4523f"/><circle cx="42.3" cy="51.8" r="0.71" fill="#d8c7b0"/><circle cx="46.3" cy="63.8" r="0.56" fill="#c9b49c"/><circle cx="32.3" cy="59.9" r="0.59" fill="#b9604a"/><circle cx="45.9" cy="39.4" r="0.48" fill="#a8483c"/><circle cx="26.6" cy="40.8" r="0.54" fill="#a8483c"/><circle cx="25.0" cy="51.0" r="0.50" fill="#c9b49c"/><circle cx="16.3" cy="47.2" r="0.78" fill="#9a4a4a"/><circle cx="37.3" cy="51.4" r="0.74" fill="#c9b49c"/><circle cx="46.1" cy="48.0" r="0.80" fill="#9a4a4a"/><circle cx="47.6" cy="33.7" r="0.69" fill="#b9604a"/><circle cx="38.8" cy="43.0" r="0.49" fill="#b9604a"/><circle cx="31.8" cy="56.2" r="0.85" fill="#c9b49c"/><circle cx="45.8" cy="44.1" r="0.90" fill="#6e3a48"/><circle cx="44.1" cy="46.1" r="0.88" fill="#a8483c"/><circle cx="32.8" cy="52.7" r="0.64" fill="#b4523f"/><circle cx="11.5" cy="35.3" r="0.77" fill="#b9604a"/><circle cx="48.7" cy="60.7" r="0.64" fill="#9a4a4a"/><circle cx="38.9" cy="51.3" r="0.68" fill="#6e3a48"/><circle cx="31.6" cy="49.3" r="0.61" fill="#a8483c"/><circle cx="14.3" cy="33.7" r="0.70" fill="#b9604a"/><circle cx="34.4" cy="62.0" r="0.90" fill="#d8c7b0"/><circle cx="25.0" cy="37.5" r="0.71" fill="#8c3f3a"/><circle cx="39.6" cy="43.8" r="0.70" fill="#6e3a48"/><circle cx="20.2" cy="45.7" r="0.55" fill="#d8c7b0"/><circle cx="27.4" cy="58.4" r="0.89" fill="#8c3f3a"/><circle cx="25.6" cy="51.4" r="0.55" fill="#9a4a4a"/><circle cx="16.1" cy="44.0" r="0.81" fill="#a8483c"/><circle cx="47.1" cy="41.7" r="0.51" fill="#c9b49c"/><circle cx="28.9" cy="62.2" r="0.64" fill="#b4523f"/><circle cx="30.8" cy="54.2" r="0.61" fill="#6e3a48"/><circle cx="42.5" cy="41.8" r="0.79" fill="#a8483c"/><circle cx="21.7" cy="44.2" r="0.77" fill="#a8483c"/><circle cx="26.4" cy="39.0" r="0.57" fill="#d8c7b0"/><circle cx="16.4" cy="34.5" r="0.67" fill="#b9604a"/><circle cx="34.9" cy="53.6" r="0.93" fill="#9a4a4a"/><circle cx="37.0" cy="39.3" r="0.58" fill="#6e3a48"/><circle cx="38.1" cy="56.8" r="0.54" fill="#a8483c"/><circle cx="21.3" cy="43.9" r="0.65" fill="#c9b49c"/><circle cx="41.1" cy="61.5" r="0.66" fill="#b9604a"/><circle cx="44.9" cy="45.2" r="0.68" fill="#6e3a48"/><circle cx="34.8" cy="61.7" r="0.73" fill="#b4523f"/><circle cx="35.8" cy="48.8" r="0.68" fill="#9a4a4a"/><circle cx="35.8" cy="39.5" r="0.56" fill="#b9604a"/><circle cx="45.2" cy="63.9" r="0.72" fill="#d8c7b0"/><circle cx="41.0" cy="43.1" r="0.62" fill="#a8483c"/><circle cx="14.1" cy="46.9" r="0.83" fill="#b4523f"/><circle cx="29.5" cy="33.9" r="0.66" fill="#b9604a"/><circle cx="12.3" cy="49.8" r="0.69" fill="#c9b49c"/><circle cx="49.0" cy="61.4" r="0.92" fill="#6e3a48"/><circle cx="29.7" cy="62.9" r="0.83" fill="#b9604a"/><circle cx="27.7" cy="50.6" r="0.71" fill="#c9b49c"/><circle cx="43.1" cy="50.6" r="0.79" fill="#d8c7b0"/><circle cx="47.3" cy="60.4" r="0.60" fill="#8c3f3a"/><circle cx="16.4" cy="50.2" r="0.74" fill="#d8c7b0"/><circle cx="18.6" cy="49.9" r="0.75" fill="#a8483c"/><circle cx="12.1" cy="63.5" r="0.72" fill="#b4523f"/><circle cx="48.6" cy="36.8" r="0.80" fill="#b9604a"/><circle cx="13.5" cy="50.0" r="0.91" fill="#b4523f"/><circle cx="41.4" cy="45.7" r="0.69" fill="#8c3f3a"/><circle cx="15.8" cy="46.7" r="0.71" fill="#6e3a48"/><circle cx="15.1" cy="46.2" r="0.91" fill="#a8483c"/><circle cx="15.9" cy="57.5" r="0.47" fill="#a8483c"/><circle cx="16.9" cy="33.4" r="0.61" fill="#d8c7b0"/><circle cx="24.5" cy="52.5" r="0.70" fill="#b9604a"/><circle cx="33.1" cy="59.8" r="0.81" fill="#d8c7b0"/><circle cx="37.7" cy="60.7" r="0.64" fill="#a8483c"/><circle cx="26.7" cy="49.7" r="0.72" fill="#c9b49c"/><circle cx="43.8" cy="49.8" r="0.71" fill="#8c3f3a"/><circle cx="43.3" cy="52.3" r="0.57" fill="#c9b49c"/><circle cx="39.1" cy="58.5" r="0.61" fill="#c9b49c"/><circle cx="23.0" cy="62.1" r="0.84" fill="#8c3f3a"/><circle cx="18.4" cy="36.1" r="0.52" fill="#8c3f3a"/><circle cx="14.3" cy="45.2" r="0.87" fill="#b4523f"/><circle cx="27.0" cy="57.9" r="0.55" fill="#c9b49c"/><circle cx="34.9" cy="58.2" r="0.55" fill="#b9604a"/><circle cx="36.9" cy="61.7" r="0.51" fill="#9a4a4a"/><circle cx="30.2" cy="56.9" r="0.85" fill="#8c3f3a"/><circle cx="29.3" cy="33.8" r="0.52" fill="#6e3a48"/><circle cx="18.0" cy="39.4" r="0.95" fill="#c9b49c"/><circle cx="46.2" cy="36.0" r="0.52" fill="#a8483c"/><circle cx="36.9" cy="35.4" r="0.61" fill="#b9604a"/><circle cx="28.7" cy="49.2" r="0.56" fill="#b4523f"/><circle cx="25.2" cy="53.0" r="0.87" fill="#a8483c"/><circle cx="17.9" cy="47.3" r="0.65" fill="#9a4a4a"/><circle cx="18.4" cy="38.2" r="0.61" fill="#a8483c"/><circle cx="14.2" cy="59.5" r="0.73" fill="#b4523f"/><circle cx="18.3" cy="51.4" r="0.85" fill="#9a4a4a"/><circle cx="20.8" cy="61.7" r="0.86" fill="#c9b49c"/><circle cx="26.4" cy="61.2" r="0.83" fill="#9a4a4a"/><circle cx="40.1" cy="45.8" r="0.49" fill="#c9b49c"/><circle cx="24.0" cy="47.8" r="0.89" fill="#a8483c"/><circle cx="48.6" cy="61.4" r="0.57" fill="#a8483c"/><circle cx="46.9" cy="54.0" r="0.56" fill="#9a4a4a"/><circle cx="26.4" cy="38.7" r="0.64" fill="#b9604a"/><circle cx="49.0" cy="53.2" r="0.83" fill="#b9604a"/><circle cx="48.2" cy="33.7" r="0.82" fill="#b9604a"/><circle cx="20.8" cy="45.6" r="0.83" fill="#a8483c"/><circle cx="35.6" cy="33.3" r="0.58" fill="#d8c7b0"/><circle cx="45.4" cy="50.3" r="0.93" fill="#b4523f"/><circle cx="32.6" cy="64.3" r="0.85" fill="#6e3a48"/><circle cx="13.9" cy="51.8" r="0.64" fill="#a8483c"/><circle cx="46.7" cy="45.2" r="0.88" fill="#c9b49c"/><circle cx="31.6" cy="51.8" r="0.92" fill="#b4523f"/><circle cx="27.0" cy="49.6" r="0.63" fill="#d8c7b0"/><circle cx="21.9" cy="53.6" r="0.78" fill="#d8c7b0"/><circle cx="39.4" cy="33.8" r="0.74" fill="#8c3f3a"/><circle cx="35.1" cy="45.9" r="0.48" fill="#b4523f"/><circle cx="23.0" cy="45.5" r="0.49" fill="#9a4a4a"/><circle cx="45.4" cy="46.5" r="0.58" fill="#6e3a48"/><circle cx="39.7" cy="34.4" r="0.92" fill="#b9604a"/><circle cx="38.5" cy="47.8" r="0.75" fill="#8c3f3a"/><circle cx="15.4" cy="52.7" r="0.51" fill="#6e3a48"/><circle cx="43.7" cy="44.2" r="0.51" fill="#c9b49c"/><circle cx="27.8" cy="54.0" r="0.75" fill="#6e3a48"/><circle cx="35.3" cy="54.5" r="0.84" fill="#9a4a4a"/><circle cx="31.2" cy="64.4" r="0.82" fill="#d8c7b0"/><circle cx="20.1" cy="36.6" r="0.84" fill="#d8c7b0"/><circle cx="34.7" cy="44.3" r="0.75" fill="#d8c7b0"/><circle cx="38.6" cy="55.0" r="0.77" fill="#8c3f3a"/><circle cx="39.6" cy="39.0" r="0.70" fill="#8c3f3a"/><circle cx="35.8" cy="39.2" r="0.76" fill="#a8483c"/><circle cx="11.4" cy="41.2" r="0.76" fill="#a8483c"/><circle cx="14.9" cy="50.1" r="0.83" fill="#b9604a"/><circle cx="45.7" cy="38.1" r="0.77" fill="#8c3f3a"/><circle cx="25.2" cy="48.1" r="0.62" fill="#8c3f3a"/><circle cx="29.8" cy="37.2" r="0.85" fill="#b9604a"/><circle cx="28.0" cy="58.9" r="0.67" fill="#8c3f3a"/><circle cx="39.4" cy="45.3" r="0.63" fill="#c9b49c"/><circle cx="35.8" cy="64.2" r="0.60" fill="#9a4a4a"/><circle cx="39.8" cy="59.0" r="0.66" fill="#c9b49c"/><circle cx="25.0" cy="36.1" r="0.49" fill="#9a4a4a"/><circle cx="14.2" cy="50.8" r="0.86" fill="#6e3a48"/><circle cx="28.6" cy="58.9" r="0.49" fill="#a8483c"/><circle cx="19.1" cy="53.9" r="0.80" fill="#b9604a"/><circle cx="29.8" cy="57.1" r="0.59" fill="#9a4a4a"/><circle cx="16.4" cy="44.3" r="0.63" fill="#9a4a4a"/><circle cx="15.5" cy="55.3" r="0.67" fill="#d8c7b0"/><circle cx="41.5" cy="42.6" r="0.56" fill="#9a4a4a"/></g><path d="M0 64.5 V59.4 Q2.2 57.4 3.8 59.8 V64.5 Z" fill="#1d1b1a"/></svg>
<div class="bl" style="right:482.9px;top:227.50px;min-width:139.9px;width:max-content;font-size:7px;line-height:8px;color:#f8e6c2;font-weight:normal;-webkit-text-stroke:0.16px #f8e6c2">natter of immense honour to lead this publication.</div>
<div class="bl" style="right:482.9px;top:234.91px;min-width:139.9px;width:max-content;font-size:7px;line-height:8px;color:#f8e6c2;font-weight:normal;-webkit-text-stroke:0.16px #f8e6c2">galitarian is a publication dedicated to addressing</div>
<div class="bl" style="right:482.9px;top:242.32px;min-width:139.9px;width:max-content;font-size:7px;line-height:8px;color:#f8e6c2;font-weight:normal;-webkit-text-stroke:0.16px #f8e6c2">l uniting like-minded individuals to foster a fairer</div>
<div class="bl" style="right:482.9px;top:249.73px;min-width:139.9px;width:max-content;font-size:7px;line-height:8px;color:#f8e6c2;font-weight:normal;-webkit-text-stroke:0.16px #f8e6c2">f the magazine, we delve into the topic of Sexual</div>
<div class="bl" style="right:482.9px;top:257.14px;min-width:139.9px;width:max-content;font-size:7px;line-height:8px;color:#f8e6c2;font-weight:normal;-webkit-text-stroke:0.16px #f8e6c2">oncerning rise in Pakistan over the past few years.</div>
<div class="bl" style="right:482.9px;top:264.55px;min-width:139.9px;width:max-content;font-size:7px;line-height:8px;color:#f8e6c2;font-weight:normal;-webkit-text-stroke:0.16px #f8e6c2">routh about the issue and then suggest frameworks</div>
<div class="bl" style="right:482.9px;top:271.96px;min-width:139.9px;width:max-content;font-size:7px;line-height:8px;color:#f8e6c2;font-weight:normal;-webkit-text-stroke:0.16px #f8e6c2">ent on a societal level and individuals in their own</div>
<div class="bl" style="right:482.9px;top:279.37px;min-width:139.9px;width:max-content;font-size:7px;line-height:8px;color:#f8e6c2;font-weight:normal;-webkit-text-stroke:0.16px #f8e6c2">und adapt. However, it is so much more than that, it</div>
<div class="bl" style="right:482.9px;top:286.78px;min-width:139.9px;width:max-content;font-size:7px;line-height:8px;color:#f8e6c2;font-weight:normal;-webkit-text-stroke:0.16px #f8e6c2">nen&rsquo;s stories that went unheard; it is about taking a</div>
<div class="bl" style="right:482.9px;top:294.19px;min-width:139.9px;width:max-content;font-size:7px;line-height:8px;color:#f8e6c2;font-weight:normal;-webkit-text-stroke:0.16px #f8e6c2">m the unnecessary and unrealistic burdens and</div>
<div class="bl" style="right:482.9px;top:301.60px;min-width:139.9px;width:max-content;font-size:7px;line-height:8px;color:#f8e6c2;font-weight:normal;-webkit-text-stroke:0.16px #f8e6c2;text-align-last:left;text-align:left">from generations.</div>
<div class="bl" style="right:482.9px;top:317.00px;min-width:139.9px;width:max-content;font-size:7px;line-height:8px;color:#f8e6c2;font-weight:normal;-webkit-text-stroke:0.16px #f8e6c2">mbition for me to contribute for the good of the</div>
<div class="bl" style="right:482.9px;top:324.33px;min-width:139.9px;width:max-content;font-size:7px;line-height:8px;color:#f8e6c2;font-weight:normal;-webkit-text-stroke:0.16px #f8e6c2">l empowering for the newer generations to come,</div>
<div class="bl" style="right:482.9px;top:331.66px;min-width:139.9px;width:max-content;font-size:7px;line-height:8px;color:#f8e6c2;font-weight:normal;-webkit-text-stroke:0.16px #f8e6c2">ay to it. I believe it is only through action that we</div>
<div class="bl" style="right:482.9px;top:338.99px;min-width:139.9px;width:max-content;font-size:7px;line-height:8px;color:#f8e6c2;font-weight:normal;-webkit-text-stroke:0.16px #f8e6c2">on solving the underlying problems that the older</div>
<div class="bl" style="right:482.9px;top:346.32px;min-width:139.9px;width:max-content;font-size:7px;line-height:8px;color:#f8e6c2;font-weight:normal;-webkit-text-stroke:0.16px #f8e6c2">a carpet instead of resisting. As a woman who has</div>
<div class="bl" style="right:482.9px;top:353.65px;min-width:139.9px;width:max-content;font-size:7px;line-height:8px;color:#f8e6c2;font-weight:normal;-webkit-text-stroke:0.16px #f8e6c2">ving in Pakistan, I am certain, that this edition is</div>
<div class="bl" style="right:482.9px;top:360.98px;min-width:139.9px;width:max-content;font-size:7px;line-height:8px;color:#f8e6c2;font-weight:normal;-webkit-text-stroke:0.16px #f8e6c2">women who came before me and fought their way</div>
<div class="bl" style="right:482.9px;top:368.31px;min-width:139.9px;width:max-content;font-size:7px;line-height:8px;color:#f8e6c2;font-weight:normal;-webkit-text-stroke:0.16px #f8e6c2">build a life they deeply desired. I aspire every</div>
<div class="bl" style="right:482.9px;top:375.64px;min-width:139.9px;width:max-content;font-size:7px;line-height:8px;color:#f8e6c2;font-weight:normal;-webkit-text-stroke:0.16px #f8e6c2">ng valuable from this magazine, something that</div>
<div class="bl" style="right:482.9px;top:382.97px;min-width:139.9px;width:max-content;font-size:7px;line-height:8px;color:#f8e6c2;font-weight:normal;-webkit-text-stroke:0.16px #f8e6c2">nvision, something that changes your outlook on</div>
<div class="bl" style="right:482.9px;top:390.30px;min-width:139.9px;width:max-content;font-size:7px;line-height:8px;color:#f8e6c2;font-weight:normal;-webkit-text-stroke:0.16px #f8e6c2">shape with your perspectives and mould into</div>
<div class="bl" style="right:482.9px;top:397.63px;min-width:139.9px;width:max-content;font-size:7px;line-height:8px;color:#f8e6c2;font-weight:normal;-webkit-text-stroke:0.16px #f8e6c2">out every single day - something that makes you</div>
<div class="bl" style="right:482.9px;top:404.96px;min-width:139.9px;width:max-content;font-size:7px;line-height:8px;color:#f8e6c2;font-weight:normal;-webkit-text-stroke:0.16px #f8e6c2">ns have the power to bring about a fundamental</div>
<div class="bl" style="right:482.9px;top:412.29px;min-width:139.9px;width:max-content;font-size:7px;line-height:8px;color:#f8e6c2;font-weight:normal;-webkit-text-stroke:0.16px #f8e6c2">r behaves. So, with that, I present to you the fall</div>
<div class="bl" style="left:200.5px;top:179.90px;width:135.5px;font-size:6.15px;line-height:8px;color:#3a281a;font-family:DejaVu Serif,serif;font-weight:normal;-webkit-text-stroke:0.12px #3a281a">It is history that women of the past have</div>
<div class="bl" style="left:200.5px;top:186.85px;width:135.5px;font-size:6.15px;line-height:8px;color:#3a281a;font-family:DejaVu Serif,serif;font-weight:normal;-webkit-text-stroke:0.12px #3a281a">been victims of state policies to appease</div>
<div class="bl" style="left:200.5px;top:193.80px;width:135.5px;font-size:6.15px;line-height:8px;color:#3a281a;font-family:DejaVu Serif,serif;font-weight:normal;-webkit-text-stroke:0.12px #3a281a">the extremists. Although there has been</div>
<div class="bl" style="left:200.5px;top:200.75px;width:135.5px;font-size:6.15px;line-height:8px;color:#3a281a;font-family:DejaVu Serif,serif;font-weight:normal;-webkit-text-stroke:0.12px #3a281a">progress particularly due to the women in</div>
<div class="bl" style="left:200.5px;top:207.70px;width:135.5px;font-size:6.15px;line-height:8px;color:#3a281a;font-family:DejaVu Serif,serif;font-weight:normal;-webkit-text-stroke:0.12px #3a281a">federal and provincial legislatures who</div>
<div class="bl" style="left:200.5px;top:214.65px;width:135.5px;font-size:6.15px;line-height:8px;color:#3a281a;font-family:DejaVu Serif,serif;font-weight:normal;-webkit-text-stroke:0.12px #3a281a">were committed to attaining women&rsquo;s</div>
<div class="bl" style="left:200.5px;top:221.60px;width:135.5px;font-size:6.15px;line-height:8px;color:#3a281a;font-family:DejaVu Serif,serif;font-weight:normal;-webkit-text-stroke:0.12px #3a281a">autonomy and rights, a fundamental</div>
<div class="bl" style="left:200.5px;top:228.55px;width:135.5px;font-size:6.15px;line-height:8px;color:#3a281a;font-family:DejaVu Serif,serif;font-weight:normal;-webkit-text-stroke:0.12px #3a281a">change in the social attitudes needs to</div>
<div class="bl" style="left:200.5px;top:235.50px;width:135.5px;font-size:6.15px;line-height:8px;color:#3a281a;font-family:DejaVu Serif,serif;font-weight:normal;-webkit-text-stroke:0.12px #3a281a">occur for this problem to be effectively</div>
<div class="bl" style="left:200.5px;top:242.45px;width:135.5px;font-size:6.15px;line-height:8px;color:#3a281a;font-family:DejaVu Serif,serif;font-weight:normal;-webkit-text-stroke:0.12px #3a281a">solved. Violence against women is a major</div>
<div class="bl" style="left:200.5px;top:249.40px;width:135.5px;font-size:6.15px;line-height:8px;color:#3a281a;font-family:DejaVu Serif,serif;font-weight:normal;-webkit-text-stroke:0.12px #3a281a">problem that Pakistan faces; from a</div>
<div class="bl" style="left:200.5px;top:256.35px;width:135.5px;font-size:6.15px;line-height:8px;color:#3a281a;font-family:DejaVu Serif,serif;font-weight:normal;-webkit-text-stroke:0.12px #3a281a">questionnaire for measuring physical,</div>
<div class="bl" style="left:200.5px;top:263.30px;width:135.5px;font-size:6.15px;line-height:8px;color:#3a281a;font-family:DejaVu Serif,serif;font-weight:normal;-webkit-text-stroke:0.12px #3a281a">verbal and non-verbal sexual harassment</div>
<div class="bl" style="left:200.5px;top:270.25px;width:135.5px;font-size:6.15px;line-height:8px;color:#3a281a;font-family:DejaVu Serif,serif;font-weight:normal;-webkit-text-stroke:0.12px #3a281a">completed by 543 female students in</div>
<div class="bl" style="left:200.5px;top:277.20px;width:135.5px;font-size:6.15px;line-height:8px;color:#3a281a;font-family:DejaVu Serif,serif;font-weight:normal;-webkit-text-stroke:0.12px #3a281a">Pakistan, only 2.8% of the respondents had</div>
<div class="bl" style="left:200.5px;top:284.15px;width:135.5px;font-size:6.15px;line-height:8px;color:#3a281a;font-family:DejaVu Serif,serif;font-weight:normal;-webkit-text-stroke:0.12px #3a281a">never been victimised from any forms of</div>
<div class="bl" style="left:200.5px;top:291.10px;width:135.5px;font-size:6.15px;line-height:8px;color:#3a281a;font-family:DejaVu Serif,serif;font-weight:normal;-webkit-text-stroke:0.12px #3a281a">sexual harassment. This emphasises the</div>
<div class="bl" style="left:200.5px;top:298.05px;width:135.5px;font-size:6.15px;line-height:8px;color:#3a281a;font-family:DejaVu Serif,serif;font-weight:normal;-webkit-text-stroke:0.12px #3a281a">urgent need to tackle this issue within the</div>
<div class="bl" style="left:200.5px;top:305.00px;width:135.5px;font-size:6.15px;line-height:8px;color:#3a281a;font-family:DejaVu Serif,serif;font-weight:normal;-webkit-text-stroke:0.12px #3a281a;text-align-last:left;text-align:left">country.</div>
<div class="bl" style="left:200.5px;top:311.95px;width:135.5px;font-size:6.15px;line-height:8px;color:#3a281a;font-family:DejaVu Serif,serif;font-weight:normal;-webkit-text-stroke:0.12px #3a281a">While there has been considerable number</div>
<div class="bl" style="left:200.5px;top:318.90px;width:135.5px;font-size:6.15px;line-height:8px;color:#3a281a;font-family:DejaVu Serif,serif;font-weight:normal;-webkit-text-stroke:0.12px #3a281a">of discussions on identification and</div>
<div class="bl" style="left:200.5px;top:325.85px;width:135.5px;font-size:6.15px;line-height:8px;color:#3a281a;font-family:DejaVu Serif,serif;font-weight:normal;-webkit-text-stroke:0.12px #3a281a">prosecution of rape in Pakistan, one aspect</div>
<div class="bl" style="left:200.5px;top:332.80px;width:135.5px;font-size:6.15px;line-height:8px;color:#3a281a;font-family:DejaVu Serif,serif;font-weight:normal;-webkit-text-stroke:0.12px #3a281a">that has still talked about relatively little is</div>
<div class="bl" style="left:200.5px;top:339.75px;width:135.5px;font-size:6.15px;line-height:8px;color:#3a281a;font-family:DejaVu Serif,serif;font-weight:normal;-webkit-text-stroke:0.12px #3a281a">marital rape. To put this in perspective, it</div>
<div class="bl" style="left:200.5px;top:346.70px;width:135.5px;font-size:6.15px;line-height:8px;color:#3a281a;font-family:DejaVu Serif,serif;font-weight:normal;-webkit-text-stroke:0.12px #3a281a">was reported by The United Nations</div>
<div class="bl" style="left:200.5px;top:353.65px;width:135.5px;font-size:6.15px;line-height:8px;color:#3a281a;font-family:DejaVu Serif,serif;font-weight:normal;-webkit-text-stroke:0.12px #3a281a">Population Fund that about 40% of women</div>
<div class="bl" style="left:200.5px;top:360.60px;width:135.5px;font-size:6.15px;line-height:8px;color:#3a281a;font-family:DejaVu Serif,serif;font-weight:normal;-webkit-text-stroke:0.12px #3a281a">in Pakistan are victims of spousal violence,</div>
<div class="bl" style="left:200.5px;top:367.55px;width:135.5px;font-size:6.15px;line-height:8px;color:#3a281a;font-family:DejaVu Serif,serif;font-weight:normal;-webkit-text-stroke:0.12px #3a281a">however, prior to September 2018 there</div>
<div class="bl" style="left:200.5px;top:374.50px;width:135.5px;font-size:6.15px;line-height:8px;color:#3a281a;font-family:DejaVu Serif,serif;font-weight:normal;-webkit-text-stroke:0.12px #3a281a">had not been a single case of marital rape</div>
<div class="bl" style="left:200.5px;top:381.45px;width:135.5px;font-size:6.15px;line-height:8px;color:#3a281a;font-family:DejaVu Serif,serif;font-weight:normal;-webkit-text-stroke:0.12px #3a281a">filed or prosecuted. In fact, it was in 2021</div>
<div class="bl" style="left:200.5px;top:388.40px;width:135.5px;font-size:6.15px;line-height:8px;color:#3a281a;font-family:DejaVu Serif,serif;font-weight:normal;-webkit-text-stroke:0.12px #3a281a">that Section 375 of the Pakistan Penal</div>
<div class="bl" style="left:200.5px;top:395.35px;width:135.5px;font-size:6.15px;line-height:8px;color:#3a281a;font-family:DejaVu Serif,serif;font-weight:normal;-webkit-text-stroke:0.12px #3a281a">Code was amended which now expands to</div>
<div class="bl" style="left:200.5px;top:402.30px;width:135.5px;font-size:6.15px;line-height:8px;color:#3a281a;font-family:DejaVu Serif,serif;font-weight:normal;-webkit-text-stroke:0.12px #3a281a">including sodomy within its ambit.</div>
<div class="bl" style="left:200.5px;top:409.25px;width:135.5px;font-size:6.15px;line-height:8px;color:#3a281a;font-family:DejaVu Serif,serif;font-weight:normal;-webkit-text-stroke:0.12px #3a281a">Research conducted by a management</div>
<div class="bl" style="left:200.5px;top:416.20px;width:135.5px;font-size:6.15px;line-height:8px;color:#3a281a;font-family:DejaVu Serif,serif;font-weight:normal;-webkit-text-stroke:0.12px #3a281a">sciences student from LUMS discussed the</div>
<div class="bl" style="left:344px;top:179.90px;width:135.3px;font-size:6.1px;line-height:8px;color:#3a281a;font-family:DejaVu Serif,serif;font-weight:normal;-webkit-text-stroke:0.12px #3a281a">A similar point is poverty; for a developing</div>
<div class="bl" style="left:344px;top:187.19px;width:135.3px;font-size:6.1px;line-height:8px;color:#3a281a;font-family:DejaVu Serif,serif;font-weight:normal;-webkit-text-stroke:0.12px #3a281a">country, Pakistan, poverty rate increased</div>
<div class="bl" style="left:344px;top:194.48px;width:135.3px;font-size:6.1px;line-height:8px;color:#3a281a;font-family:DejaVu Serif,serif;font-weight:normal;-webkit-text-stroke:0.12px #3a281a">from 34.2% to 39.4% within a single year</div>
<div class="bl" style="left:344px;top:201.77px;width:135.3px;font-size:6.1px;line-height:8px;color:#3a281a;font-family:DejaVu Serif,serif;font-weight:normal;-webkit-text-stroke:0.12px #3a281a">pushing 12.5 million more people living</div>
<div class="bl" style="left:344px;top:209.06px;width:135.3px;font-size:6.1px;line-height:8px;color:#3a281a;font-family:DejaVu Serif,serif;font-weight:normal;-webkit-text-stroke:0.12px #3a281a">under poverty line of the $3.65 per day</div>
<div class="bl" style="left:344px;top:216.35px;width:135.3px;font-size:6.1px;line-height:8px;color:#3a281a;font-family:DejaVu Serif,serif;font-weight:normal;-webkit-text-stroke:0.12px #3a281a">income level. This results in families</div>
<div class="bl" style="left:344px;top:223.64px;width:135.3px;font-size:6.1px;line-height:8px;color:#3a281a;font-family:DejaVu Serif,serif;font-weight:normal;-webkit-text-stroke:0.12px #3a281a">prioritising education of boys over</div>
<div class="bl" style="left:344px;top:230.93px;width:135.3px;font-size:6.1px;line-height:8px;color:#3a281a;font-family:DejaVu Serif,serif;font-weight:normal;-webkit-text-stroke:0.12px #3a281a">education of girls in their families</div>
<div class="bl" style="left:344px;top:238.22px;width:135.3px;font-size:6.1px;line-height:8px;color:#3a281a;font-family:DejaVu Serif,serif;font-weight:normal;-webkit-text-stroke:0.12px #3a281a">especially in villages of interior Sindh and</div>
<div class="bl" style="left:344px;top:245.51px;width:135.3px;font-size:6.1px;line-height:8px;color:#3a281a;font-family:DejaVu Serif,serif;font-weight:normal;-webkit-text-stroke:0.12px #3a281a">Southern Punjab. Due to this, girls are</div>
<div class="bl" style="left:344px;top:252.80px;width:135.3px;font-size:6.1px;line-height:8px;color:#3a281a;font-family:DejaVu Serif,serif;font-weight:normal;-webkit-text-stroke:0.12px #3a281a">forced into early marriages and in addition</div>
<div class="bl" style="left:344px;top:260.09px;width:135.3px;font-size:6.1px;line-height:8px;color:#3a281a;font-family:DejaVu Serif,serif;font-weight:normal;-webkit-text-stroke:0.12px #3a281a">to the lower level of sex education and</div>
<div class="bl" style="left:344px;top:267.38px;width:135.3px;font-size:6.1px;line-height:8px;color:#3a281a;font-family:DejaVu Serif,serif;font-weight:normal;-webkit-text-stroke:0.12px #3a281a">bodily autonomy, possibilities of violence</div>
<div class="bl" style="left:344px;top:274.67px;width:135.3px;font-size:6.1px;line-height:8px;color:#3a281a;font-family:DejaVu Serif,serif;font-weight:normal;-webkit-text-stroke:0.12px #3a281a">in those marriages increase since they</div>
<div class="bl" style="left:344px;top:281.96px;width:135.3px;font-size:6.1px;line-height:8px;color:#3a281a;font-family:DejaVu Serif,serif;font-weight:normal;-webkit-text-stroke:0.12px #3a281a">depend on their partners for financial</div>
<div class="bl" style="left:344px;top:289.25px;width:135.3px;font-size:6.1px;line-height:8px;color:#3a281a;font-family:DejaVu Serif,serif;font-weight:normal;-webkit-text-stroke:0.12px #3a281a">support because of the power dynamic in</div>
<div class="bl" style="left:344px;top:296.54px;width:135.3px;font-size:6.1px;line-height:8px;color:#3a281a;font-family:DejaVu Serif,serif;font-weight:normal;-webkit-text-stroke:0.12px #3a281a">relationships that are deeply rooted in the</div>
<div class="bl" style="left:344px;top:303.83px;width:135.3px;font-size:6.1px;line-height:8px;color:#3a281a;font-family:DejaVu Serif,serif;font-weight:normal;-webkit-text-stroke:0.12px #3a281a;text-align-last:left;text-align:left">cultural norms of the society.</div>
<div class="bl" style="left:344px;top:311.12px;width:135.3px;font-size:6.1px;line-height:8px;color:#3a281a;font-family:DejaVu Serif,serif;font-weight:normal;-webkit-text-stroke:0.12px #3a281a">By this, a vicious cycle has been created in</div>
<div class="bl" style="left:344px;top:318.41px;width:135.3px;font-size:6.1px;line-height:8px;color:#3a281a;font-family:DejaVu Serif,serif;font-weight:normal;-webkit-text-stroke:0.12px #3a281a">the society that plays a role in nearly all</div>
<div class="bl" style="left:344px;top:325.70px;width:135.3px;font-size:6.1px;line-height:8px;color:#3a281a;font-family:DejaVu Serif,serif;font-weight:normal;-webkit-text-stroke:0.12px #3a281a">causes of sexual harassment faced by</div>
<div class="bl" style="left:344px;top:332.99px;width:135.3px;font-size:6.1px;line-height:8px;color:#3a281a;font-family:DejaVu Serif,serif;font-weight:normal;-webkit-text-stroke:0.12px #3a281a">women. The societal dynamics that have</div>
<div class="bl" style="left:344px;top:340.28px;width:135.3px;font-size:6.1px;line-height:8px;color:#3a281a;font-family:DejaVu Serif,serif;font-weight:normal;-webkit-text-stroke:0.12px #3a281a">been built over the generations that</div>
<div class="bl" style="left:344px;top:347.57px;width:135.3px;font-size:6.1px;line-height:8px;color:#3a281a;font-family:DejaVu Serif,serif;font-weight:normal;-webkit-text-stroke:0.12px #3a281a">pressurizes women in abusive marriages to</div>
<div class="bl" style="left:344px;top:354.86px;width:135.3px;font-size:6.1px;line-height:8px;color:#3a281a;font-family:DejaVu Serif,serif;font-weight:normal;-webkit-text-stroke:0.12px #3a281a">&ldquo;make it work&rdquo; instead of recognising the</div>
<div class="bl" style="left:344px;top:362.15px;width:135.3px;font-size:6.1px;line-height:8px;color:#3a281a;font-family:DejaVu Serif,serif;font-weight:normal;-webkit-text-stroke:0.12px #3a281a">need to encourage fellow women and</div>
<div class="bl" style="left:344px;top:369.44px;width:135.3px;font-size:6.1px;line-height:8px;color:#3a281a;font-family:DejaVu Serif,serif;font-weight:normal;-webkit-text-stroke:0.12px #3a281a">empowering them to stand their ground.</div>
<div class="bl" style="left:344px;top:376.73px;width:135.3px;font-size:6.1px;line-height:8px;color:#3a281a;font-family:DejaVu Serif,serif;font-weight:normal;-webkit-text-stroke:0.12px #3a281a">So, I write this to you, dear reader, the next</div>
<div class="bl" style="left:344px;top:384.02px;width:135.3px;font-size:6.1px;line-height:8px;color:#3a281a;font-family:DejaVu Serif,serif;font-weight:normal;-webkit-text-stroke:0.12px #3a281a">time you hear a woman among you talk</div>
<div class="bl" style="left:344px;top:391.31px;width:135.3px;font-size:6.1px;line-height:8px;color:#3a281a;font-family:DejaVu Serif,serif;font-weight:normal;-webkit-text-stroke:0.12px #3a281a">about abusive cycles within marriage or</div>
<div class="bl" style="left:344px;top:398.60px;width:135.3px;font-size:6.1px;line-height:8px;color:#3a281a;font-family:DejaVu Serif,serif;font-weight:normal;-webkit-text-stroke:0.12px #3a281a">similar problems which arise concern for</div>
<div class="bl" style="left:344px;top:405.89px;width:135.3px;font-size:6.1px;line-height:8px;color:#3a281a;font-family:DejaVu Serif,serif;font-weight:normal;-webkit-text-stroke:0.12px #3a281a">her safety, reach out to someone who can</div>
<div class="bl" style="left:344px;top:413.18px;width:135.3px;font-size:6.1px;line-height:8px;color:#3a281a;font-family:DejaVu Serif,serif;font-weight:normal;-webkit-text-stroke:0.12px #3a281a">intervene and help. Don&rsquo;t just sit and</div>
<div class="a" style="left:356px;top:165.4px;width:122.3px;text-align:right;font-family:DejaVu Serif,serif;font-size:5.3px;line-height:6.3px;color:#2e1f14;white-space:nowrap;-webkit-text-stroke:0.12px #2e1f14">and together, we should raise our<br>voices for the women who can not</div>
<div class="a ser" id="hd" style="left:199.6px;top:106.5px;font-size:50.5px;line-height:56px;color:#4e3323;white-space:nowrap;transform-origin:0 0;transform:scaleX(0.782);-webkit-text-stroke:0.8px #4e3323">Together, we can!</div>
<div class="g" style="left:199.4px;top:0;width:1.2px;height:421px"></div>
<div class="g" style="left:335.6px;top:0;width:1.2px;height:421px"></div>
<div class="g" style="left:341.5px;top:0;width:1.2px;height:421px"></div>
<div class="g" style="left:479px;top:0;width:1.2px;height:421px"></div>
<div class="g" style="left:0;top:109.5px;width:623px;height:1.1px"></div>
<div class="g" style="left:0;top:151.5px;width:623px;height:1.1px"></div>
<div class="a" style="left:200px;top:110px;width:279px;height:51px;border:1px solid #4a86e8"></div>
<div class="hd" style="left:196.5px;top:106.5px"></div>
<div class="hd" style="left:196.5px;top:131.5px"></div>
<div class="hd" style="left:196.5px;top:156.5px"></div>
<div class="hd" style="left:335.0px;top:106.5px"></div>
<div class="hd" style="left:335.0px;top:156.5px"></div>
<div class="hd" style="left:474.5px;top:106.5px"></div>
<div class="hd" style="left:474.5px;top:131.5px"></div>
<div class="hd" style="left:474.5px;top:156.5px"></div>
</div>
<div class="a" style="left:667px;top:66.5px;width:13px;height:434.5px;background:#4a4a4a"></div>
<div class="a" style="left:668.8px;top:170px;width:9.2px;height:150.6px;background:#696969;border-radius:1px"></div>
<svg class="a" style="left:669.5px;top:72.5px" width="7" height="5" viewBox="0 0 7 5"><path d="M1 4 L3.5 1.4 L6 4" fill="none" stroke="#7e7e7e" stroke-width="1"/></svg>
<svg class="a" style="left:669.5px;top:490px" width="7" height="5" viewBox="0 0 7 5"><path d="M1 1 L3.5 3.6 L6 1" fill="none" stroke="#8a8a8a" stroke-width="1"/></svg>
<div class="a" style="left:30.5px;top:501px;width:649.5px;height:13px;background:#505050"></div>
<div class="a" style="left:30.5px;top:501px;width:37px;height:13px;background:#484848"></div>
<span class="a" style="left:39.7px;top:501.40px;font-size:9.4px;line-height:12.2px;font-weight:normal;color:#ededed;font-family:'Liberation Sans',sans-serif;white-space:nowrap;transform-origin:0 50%;transform:scaleX(0.805);">145%</span>
<span class="a" style="left:87.5px;top:501.40px;font-size:9.4px;line-height:12.2px;font-weight:normal;color:#ededed;font-family:'Liberation Sans',sans-serif;white-space:nowrap;transform-origin:0 50%;transform:scaleX(0.811);">29.7 cm x 21.1 cm (72 ppi)</span>
<svg class="a" style="left:199px;top:503.5px" width="6" height="8" viewBox="0 0 6 8"><path d="M1.5 1 L4.5 4 L1.5 7" fill="none" stroke="#c4c4c4" stroke-width="1"/></svg>
<svg class="a" style="left:213px;top:503.5px" width="6" height="8" viewBox="0 0 6 8"><path d="M4.5 1 L1.5 4 L4.5 7" fill="none" stroke="#7a7a7a" stroke-width="1"/></svg>
<div class="a" style="left:392px;top:503px;width:155.5px;height:8.5px;background:#6a6a6a;border-radius:1px"></div>
<svg class="a" style="left:656px;top:503.5px" width="6" height="8" viewBox="0 0 6 8"><path d="M1.5 1 L4.5 4 L1.5 7" fill="none" stroke="#8a8a8a" stroke-width="1"/></svg>
<div class="a" style="left:0;top:45px;width:30.5px;height:474px;background:#535353;border-right:1px solid #3e3e3e"></div>
<div class="a" style="left:0;top:45px;width:30px;height:8.5px;background:#484848"></div>
<svg class="a" style="left:4px;top:46.5px" width="7" height="6" viewBox="0 0 7 6"><path d="M0.8 0.8 L3 3 L0.8 5.2 M3.8 0.8 L6 3 L3.8 5.2" fill="none" stroke="#e0e0e0" stroke-width="0.9"/></svg>
<div class="a" style="left:7.5px;top:57px;width:14.5px;height:2px;background:#484848"></div>
<svg class="a" style="left:0;top:66.75px" width="30" height="20" viewBox="0 0 30 20"><g stroke="#dadada" stroke-width="0.45" stroke-linejoin="round"><path d="M15 4.6 V15.4 M9.6 10 H20.4" stroke="#dadada" stroke-width="1.4" fill="none"/><path d="M15 3 L17.4 6 H12.6 Z M15 17 L12.6 14 H17.4 Z M8 10 L11 7.6 V12.4 Z M22 10 L19 12.4 V7.6 Z" fill="#dadada"/></g><path d="M25.2 15.4 V18 H22.6 Z" fill="#dadada"/></svg>
<svg class="a" style="left:0;top:86.62px" width="30" height="20" viewBox="0 0 30 20"><g stroke="#dadada" stroke-width="0.45" stroke-linejoin="round"><rect x="9.2" y="4.9" width="11.6" height="10.2" rx="1.6" fill="none" stroke="#dadada" stroke-width="1.3" stroke-dasharray="3 1.7"/></g><path d="M25.2 15.4 V18 H22.6 Z" fill="#dadada"/></svg>
<svg class="a" style="left:0;top:106.49px" width="30" height="20" viewBox="0 0 30 20"><g stroke="#dadada" stroke-width="0.45" stroke-linejoin="round"><ellipse cx="15.6" cy="8.6" rx="6.3" ry="4.3" transform="rotate(-12 15.6 8.6)" fill="none" stroke="#dadada" stroke-width="1.3"/><path d="M10.6 11.2 C9 11.4 8.6 13.4 10.2 14 C12 14.6 12.4 16.2 10.8 17.4" fill="none" stroke="#dadada" stroke-width="1.2"/></g><path d="M25.2 15.4 V18 H22.6 Z" fill="#dadada"/></svg>
<svg class="a" style="left:0;top:126.36px" width="30" height="20" viewBox="0 0 30 20"><g stroke="#dadada" stroke-width="0.45" stroke-linejoin="round"><ellipse cx="11.6" cy="11.4" rx="4" ry="4.8" fill="none" stroke="#dadada" stroke-width="1.1" stroke-dasharray="7 1.6"/><path d="M22 2.6 C19.6 4.6 17.2 7.4 15.6 10 L18 12 C20 9.4 21.8 6 22 2.6 Z" fill="#dadada"/><path d="M14.8 10.8 L17.4 12.9 C16.6 15 14.4 15.8 12.4 15.2 C13.8 14.2 13.6 12.2 14.8 10.8 Z" fill="#dadada"/></g><path d="M25.2 15.4 V18 H22.6 Z" fill="#dadada"/></svg>
<svg class="a" style="left:0;top:146.23px" width="30" height="20" viewBox="0 0 30 20"><g stroke="#dadada" stroke-width="0.45" stroke-linejoin="round"><path d="M11.2 2.8 V14.6 H22.4 M7.8 6 H18.6 V17.4" fill="none" stroke="#dadada" stroke-width="1.5"/></g><path d="M25.2 15.4 V18 H22.6 Z" fill="#dadada"/></svg>
<svg class="a" style="left:0;top:166.10px" width="30" height="20" viewBox="0 0 30 20"><g stroke="#dadada" stroke-width="0.45" stroke-linejoin="round"><rect x="8.8" y="4.6" width="13.6" height="10.6" fill="none" stroke="#dadada" stroke-width="1.3"/><path d="M8.8 4.6 L22.4 15.2 M22.4 4.6 L8.8 15.2" stroke="#dadada" stroke-width="1.2"/></g></svg>
<svg class="a" style="left:0;top:185.97px" width="30" height="20" viewBox="0 0 30 20"><g stroke="#dadada" stroke-width="0.45" stroke-linejoin="round"><path d="M9.2 16.6 L8.4 14.6 L15.2 7.8 L17.2 9.8 L10.4 16.6 Z" fill="none" stroke="#dadada" stroke-width="1.2"/><path d="M14.4 6.2 L18.8 10.6 L20 9.4 L18.8 8.2 L21.2 5.6 C22.2 4.4 20.6 2.8 19.4 3.8 L16.8 6.2 L15.6 5 Z" fill="#dadada"/></g><path d="M25.2 15.4 V18 H22.6 Z" fill="#dadada"/></svg>
<svg class="a" style="left:0;top:205.84px" width="30" height="20" viewBox="0 0 30 20"><g stroke="#dadada" stroke-width="0.45" stroke-linejoin="round"><g transform="rotate(-40 15 10)"><rect x="7.6" y="6.8" width="14.8" height="6.4" rx="1.6" fill="#dadada"/><path d="M11.4 6.8 V13.2 M13.8 6.8 V13.2 M16.2 6.8 V13.2 M18.6 6.8 V13.2" stroke="#535353" stroke-width="0.9"/></g><path d="M9 9.4 A4.2 4.2 0 0 1 15.6 5.2" fill="none" stroke="#dadada" stroke-width="1"/></g><path d="M25.2 15.4 V18 H22.6 Z" fill="#dadada"/></svg>
<svg class="a" style="left:0;top:225.71px" width="30" height="20" viewBox="0 0 30 20"><g stroke="#dadada" stroke-width="0.45" stroke-linejoin="round"><path d="M21.8 2.6 C19 4.8 16 8.2 14 11 L16.6 13 C18.8 10.2 21.2 6.4 21.8 2.6 Z" fill="#dadada"/><path d="M13.2 11.8 L15.8 13.9 C15 16.4 12 17.4 9.2 16.8 C11.2 15.8 11.4 13.4 13.2 11.8 Z" fill="#dadada"/></g><path d="M25.2 15.4 V18 H22.6 Z" fill="#dadada"/></svg>
<svg class="a" style="left:0;top:245.58px" width="30" height="20" viewBox="0 0 30 20"><g stroke="#dadada" stroke-width="0.45" stroke-linejoin="round"><circle cx="15" cy="5.6" r="2.7" fill="#dadada"/><path d="M13.8 7.6 H16.2 L16.8 11.4 H20.2 V14.2 H9.8 V11.4 H13.2 Z" fill="#dadada"/><rect x="9.8" y="15.2" width="10.4" height="1.5" fill="#dadada"/></g><path d="M25.2 15.4 V18 H22.6 Z" fill="#dadada"/></svg>
<svg class="a" style="left:0;top:265.45px" width="30" height="20" viewBox="0 0 30 20"><g stroke="#dadada" stroke-width="0.45" stroke-linejoin="round"><path d="M21.6 3 C19.6 5.4 17.4 8.4 15.8 10.8 L17.6 12.2 C19.2 9.6 21 6.2 21.6 3 Z" fill="#dadada"/><path d="M15 11.6 L16.8 13 C16 15.4 13.6 16.6 11.2 16.2 C12.8 15.2 13.2 13 15 11.6 Z" fill="#dadada"/><path d="M8.4 7.8 A5 5 0 0 1 15 5" fill="none" stroke="#dadada" stroke-width="1.1"/><path d="M7 6.2 L11 7.4 L8.2 9.8 Z" fill="#dadada"/></g><path d="M25.2 15.4 V18 H22.6 Z" fill="#dadada"/></svg>
<svg class="a" style="left:0;top:285.32px" width="30" height="20" viewBox="0 0 30 20"><g stroke="#dadada" stroke-width="0.45" stroke-linejoin="round"><path d="M8.4 13.4 L15.4 5.2 L21.4 9 L16.2 16.2 H11.4 Z" fill="none" stroke="#dadada" stroke-width="1.2"/><path d="M13 8 L15.4 5.2 L21.4 9 L19 12.2 Z" fill="#dadada"/><path d="M15 16.4 H21" stroke="#dadada" stroke-width="1.1"/></g><path d="M25.2 15.4 V18 H22.6 Z" fill="#dadada"/></svg>
<svg class="a" style="left:0;top:305.19px" width="30" height="20" viewBox="0 0 30 20"><g stroke="#dadada" stroke-width="0.45" stroke-linejoin="round"><defs><linearGradient id="tg" x1="0" x2="1" y1="0" y2="0"><stop offset="0" stop-color="#111"/><stop offset="1" stop-color="#e8e8e8"/></linearGradient></defs><rect x="9" y="4.6" width="12" height="9.6" rx="0.8" fill="url(#tg)" stroke="#dadada" stroke-width="1.2"/></g><path d="M25.2 15.4 V18 H22.6 Z" fill="#dadada"/></svg>
<svg class="a" style="left:0;top:325.06px" width="30" height="20" viewBox="0 0 30 20"><g stroke="#dadada" stroke-width="0.45" stroke-linejoin="round"><path d="M15 3.4 C17 6.6 19.2 9.2 19.2 12 A4.2 4.2 0 0 1 10.8 12 C10.8 9.2 13 6.6 15 3.4 Z" fill="#dadada"/></g><path d="M25.2 15.4 V18 H22.6 Z" fill="#dadada"/></svg>
<svg class="a" style="left:0;top:344.93px" width="30" height="20" viewBox="0 0 30 20"><g stroke="#dadada" stroke-width="0.45" stroke-linejoin="round"><circle cx="17" cy="7.8" r="4" fill="#c4c4c4" stroke="#dadada" stroke-width="1.1"/><path d="M13.8 11 L9 15.8" stroke="#dadada" stroke-width="1.8" fill="none"/></g><path d="M25.2 15.4 V18 H22.6 Z" fill="#dadada"/></svg>
<svg class="a" style="left:0;top:364.80px" width="30" height="20" viewBox="0 0 30 20"><g stroke="#dadada" stroke-width="0.45" stroke-linejoin="round"><g transform="rotate(38 15 10)"><path d="M15 2.4 C18 5.4 19 8.6 17.4 12.6 H12.6 C11 8.6 12 5.4 15 2.4 Z" fill="none" stroke="#dadada" stroke-width="1.2"/><path d="M15 3.4 V9" stroke="#dadada" stroke-width="1"/><circle cx="15" cy="9.4" r="1.1" fill="#dadada"/><rect x="12.2" y="13.6" width="5.6" height="2.4" fill="#dadada"/></g></g><path d="M25.2 15.4 V18 H22.6 Z" fill="#dadada"/></svg>
<svg class="a" style="left:0;top:384.67px" width="30" height="20" viewBox="0 0 30 20"><g stroke="#dadada" stroke-width="0.45" stroke-linejoin="round"><text x="15.3" y="15.2" text-anchor="middle" font-family="Liberation Serif, serif" font-weight="bold" font-size="15.6" fill="#dadada" stroke="none" transform="translate(15.3 0) scale(0.95 1) translate(-15.3 0)">T</text></g><path d="M25.2 15.4 V18 H22.6 Z" fill="#dadada"/></svg>
<svg class="a" style="left:0;top:404.54px" width="30" height="20" viewBox="0 0 30 20"><g stroke="#dadada" stroke-width="0.45" stroke-linejoin="round"><path d="M11.4 3.4 L19.2 11 H15.6 L17.6 15.6 L15.8 16.4 L13.8 11.8 L11.4 14.2 Z" fill="#1e1e1e" stroke="#dadada" stroke-width="1.1"/></g><path d="M25.2 15.4 V18 H22.6 Z" fill="#dadada"/></svg>
<svg class="a" style="left:0;top:424.41px" width="30" height="20" viewBox="0 0 30 20"><g stroke="#dadada" stroke-width="0.45" stroke-linejoin="round"><ellipse cx="14.8" cy="9.6" rx="6.2" ry="5" fill="#7a7a7a" stroke="#dadada" stroke-width="1.2"/></g><path d="M25.2 15.4 V18 H22.6 Z" fill="#dadada"/></svg>
<svg class="a" style="left:0;top:444.28px" width="30" height="20" viewBox="0 0 30 20"><g stroke="#dadada" stroke-width="0.45" stroke-linejoin="round"><path d="M11.6 16.8 C10.4 14.6 9 12.8 8.2 11.4 C7.6 10.2 9 9.6 9.8 10.6 L11.2 12.2 V5.4 C11.2 4.2 12.8 4.2 12.8 5.4 V4.2 C12.8 3 14.6 3 14.6 4.2 V4.6 C14.6 3.4 16.4 3.4 16.4 4.6 V5.8 C16.4 4.8 18 4.8 18 5.8 V12.4 C18 14.4 17.4 15.6 16.8 16.8 Z" fill="#dadada"/><path d="M12.9 5.6 V10 M14.6 5.2 V10 M16.3 6 V10" stroke="#535353" stroke-width="0.6"/></g><path d="M25.2 15.4 V18 H22.6 Z" fill="#dadada"/></svg>
<svg class="a" style="left:0;top:464.15px" width="30" height="20" viewBox="0 0 30 20"><g stroke="#dadada" stroke-width="0.45" stroke-linejoin="round"><circle cx="13.4" cy="8.2" r="4.6" fill="none" stroke="#dadada" stroke-width="1.3"/><path d="M16.8 11.6 L21.4 16.4" stroke="#dadada" stroke-width="1.8"/><path d="M11.4 7 A2.6 2.6 0 0 1 14.6 5.8" fill="none" stroke="#dadada" stroke-width="0.9"/></g></svg>
<svg class="a" style="left:0;top:484.02px" width="30" height="20" viewBox="0 0 30 20"><g stroke="#dadada" stroke-width="0.45" stroke-linejoin="round"><circle cx="10.6" cy="10.6" r="1.5" fill="#dadada"/><circle cx="15" cy="10.6" r="1.5" fill="#dadada"/><circle cx="19.4" cy="10.6" r="1.5" fill="#dadada"/></g><path d="M25.2 15.4 V18 H22.6 Z" fill="#dadada"/></svg>
<svg class="a" style="left:3px;top:507.6px" width="24" height="9" viewBox="0 0 24 9"><rect x="3.4" y="4.4" width="5.6" height="5" fill="#eee"/><rect x="1" y="2.2" width="5.6" height="5.6" fill="#111" stroke="#eee" stroke-width="0.9"/><path d="M20.6 8 V4.8 Q20.6 3 18.6 3 H15.4 M17.2 0.8 L15 3 L17.2 5.2" fill="none" stroke="#dadada" stroke-width="1.2"/></svg>
<div class="a" style="left:680px;top:45px;width:2.5px;height:469px;background:#404040"></div>
<div class="a" style="left:682.5px;top:45px;width:28.5px;height:469px;background:#535353"></div>
<div class="a" style="left:682.5px;top:45px;width:28.5px;height:8.5px;background:#484848"></div>
<svg class="a" style="left:700.5px;top:46.5px" width="7" height="6" viewBox="0 0 7 6"><path d="M3 0.8 L0.8 3 L3 5.2 M6 0.8 L3.8 3 L6 5.2" fill="none" stroke="#e0e0e0" stroke-width="0.9"/></svg>
<div class="a" style="left:682.5px;top:84.5px;width:28.5px;height:2px;background:#404040"></div>
<div class="a" style="left:682.5px;top:137px;width:28.5px;height:2px;background:#404040"></div>
<div class="a" style="left:689px;top:56.7px;width:15px;height:2px;background:#484848"></div>
<div class="a" style="left:689px;top:88px;width:15px;height:2px;background:#484848"></div>
<svg class="a" style="left:688px;top:63px" width="17" height="16" viewBox="0 0 17 16"><rect x="2" y="1.4" width="3.4" height="3.2" fill="none" stroke="#d8d8d8" stroke-width="0.9"/><rect x="2" y="6" width="3.4" height="3.2" fill="none" stroke="#d8d8d8" stroke-width="0.9"/><rect x="2" y="10.6" width="3.4" height="3.6" fill="#d8d8d8"/><path d="M9.4 13.4 C13.4 13 14.6 8.4 12.2 5.4 C11.4 4.4 10.4 4 9.4 4" fill="none" stroke="#d8d8d8" stroke-width="1.3"/><path d="M10.2 1.6 L7.2 4 L10.2 6.6 Z" fill="#d8d8d8"/></svg>
<span class="a" style="left:690.5px;top:94.70px;font-size:12.5px;line-height:16.2px;font-weight:normal;color:#e2e2e2;font-family:'Liberation Sans',sans-serif;white-space:nowrap;transform-origin:0 50%;transform:scaleX(1.020);">A</span>
<div class="a" style="left:701px;top:96.5px;width:1.1px;height:12px;background:#e2e2e2"></div>
<svg class="a" style="left:690px;top:117.5px" width="13" height="13" viewBox="0 0 13 13"><path d="M5.6 1 H11.4 V2.2 H10.4 V12.4 H9.2 V2.2 H7.8 V12.4 H6.6 V7.4 H5.6 A3.2 3.2 0 0 1 5.6 1 Z" fill="#e2e2e2"/></svg>
<div class="a" style="left:711px;top:45px;width:2px;height:469px;background:#404040"></div>
<div class="a" style="left:713px;top:45px;width:267px;height:8.5px;background:#484848"></div>
<svg class="a" style="left:968.5px;top:46px" width="8" height="6" viewBox="0 0 8 6"><path d="M1 0.8 L3.2 3 L1 5.2 M4.4 0.8 L6.6 3 L4.4 5.2" fill="none" stroke="#ececec" stroke-width="1"/></svg>
<div class="a" style="left:713px;top:53.5px;width:267px;height:21.5px;background:#424242"></div>
<div class="a" style="left:713px;top:53.5px;width:32px;height:22px;background:#535353"></div>
<div class="a" style="left:745px;top:53.5px;width:1px;height:21.5px;background:#383838"></div>
<div class="a" style="left:791px;top:53.5px;width:1px;height:21.5px;background:#383838"></div>
<div class="a" style="left:839px;top:53.5px;width:1px;height:21.5px;background:#383838"></div>
<div class="a" style="left:883px;top:53.5px;width:1px;height:21.5px;background:#383838"></div>
<span class="a" style="left:719.5px;top:57.55px;font-size:9.6px;line-height:12.5px;font-weight:bold;color:#f6f6f6;font-family:'Liberation Sans',sans-serif;white-space:nowrap;transform-origin:0 50%;transform:scaleX(0.779);-webkit-text-stroke:0.2px #f6f6f6;">Color</span>
<span class="a" style="left:751.5px;top:57.55px;font-size:9.6px;line-height:12.5px;font-weight:bold;color:#bcbcbc;font-family:'Liberation Sans',sans-serif;white-space:nowrap;transform-origin:0 50%;transform:scaleX(0.746);-webkit-text-stroke:0.22px #bcbcbc;">Swatches</span>
<span class="a" style="left:798.2px;top:57.55px;font-size:9.6px;line-height:12.5px;font-weight:bold;color:#bcbcbc;font-family:'Liberation Sans',sans-serif;white-space:nowrap;transform-origin:0 50%;transform:scaleX(0.766);-webkit-text-stroke:0.22px #bcbcbc;">Gradients</span>
<span class="a" style="left:846.2px;top:57.55px;font-size:9.6px;line-height:12.5px;font-weight:bold;color:#bcbcbc;font-family:'Liberation Sans',sans-serif;white-space:nowrap;transform-origin:0 50%;transform:scaleX(0.781);-webkit-text-stroke:0.22px #bcbcbc;">Patterns</span>
<svg class="a" style="left:967px;top:61.5px" width="8" height="7" viewBox="0 0 8 7"><path d="M0 0.8 H8 M0 2.6 H8 M0 4.4 H8 M0 6.2 H8" stroke="#a6a6a6" stroke-width="1.1"/></svg>
<div class="a" style="left:713px;top:75px;width:267px;height:169px;background:#535353"></div>
<div class="a" style="left:728.2px;top:91.6px;width:14.8px;height:14.8px;background:#fff;border:1px solid #2a2a2a;border-radius:1.5px;box-shadow:0 0 0 0.8px #7a7a7a"></div>
<div class="a" style="left:720.2px;top:83.2px;width:14.8px;height:14.8px;background:#fff;border:1px solid #2a2a2a;border-radius:2px;box-shadow:0 0 0 0.8px #8a8a8a"></div>
<div class="a" style="left:746.5px;top:81px;width:192.5px;height:148px;background:linear-gradient(to bottom,rgba(0,0,0,0),#000),linear-gradient(to right,#fff,#f00)"></div>
<div class="a" style="left:743.5px;top:78px;width:6.4px;height:6.4px;border:1px solid #fff;border-radius:50%;box-shadow:0 0 0 0.6px #444, inset 0 0 0 0.5px #666"></div>
<div class="a" style="left:952px;top:81px;width:15px;height:148px;background:linear-gradient(to bottom,#f00 0%,#f0f 16.6%,#00f 33.3%,#0ff 50%,#0f0 66.6%,#ff0 83.3%,#f00 100%)"></div>
<svg class="a" style="left:945px;top:225.5px" width="7" height="7" viewBox="0 0 7 7"><path d="M1 0.8 L6 3.5 L1 6.2 Z" fill="#fff" stroke="#ddd" stroke-width="0.6"/></svg>
<div class="a" style="left:713px;top:244px;width:267px;height:2.4px;background:#404040"></div>
<div class="a" style="left:713px;top:246.4px;width:267px;height:21px;background:#424242"></div>
<div class="a" style="left:867.5px;top:246.4px;width:36px;height:22px;background:#535353"></div>
<div class="a" style="left:763.5px;top:246.4px;width:1px;height:21px;background:#383838"></div>
<div class="a" style="left:822.5px;top:246.4px;width:1px;height:21px;background:#383838"></div>
<div class="a" style="left:867px;top:246.4px;width:1px;height:21px;background:#383838"></div>
<div class="a" style="left:903.5px;top:246.4px;width:1px;height:21px;background:#383838"></div>
<span class="a" style="left:719.6px;top:250.35px;font-size:9.6px;line-height:12.5px;font-weight:bold;color:#bcbcbc;font-family:'Liberation Sans',sans-serif;white-space:nowrap;transform-origin:0 50%;transform:scaleX(0.788);-webkit-text-stroke:0.22px #bcbcbc;">Properties</span>
<span class="a" style="left:771px;top:250.35px;font-size:9.6px;line-height:12.5px;font-weight:bold;color:#bcbcbc;font-family:'Liberation Sans',sans-serif;white-space:nowrap;transform-origin:0 50%;transform:scaleX(0.780);-webkit-text-stroke:0.22px #bcbcbc;">Adjustments</span>
<span class="a" style="left:830px;top:250.35px;font-size:9.6px;line-height:12.5px;font-weight:bold;color:#bcbcbc;font-family:'Liberation Sans',sans-serif;white-space:nowrap;transform-origin:0 50%;transform:scaleX(0.758);-webkit-text-stroke:0.22px #bcbcbc;">Libraries</span>
<span class="a" style="left:874.7px;top:250.35px;font-size:9.6px;line-height:12.5px;font-weight:bold;color:#f6f6f6;font-family:'Liberation Sans',sans-serif;white-space:nowrap;transform-origin:0 50%;transform:scaleX(0.724);-webkit-text-stroke:0.2px #f6f6f6;">Layers</span>
<svg class="a" style="left:967px;top:255px" width="8" height="7" viewBox="0 0 8 7"><path d="M0 0.8 H8 M0 2.6 H8 M0 4.4 H8 M0 6.2 H8" stroke="#a6a6a6" stroke-width="1.1"/></svg>
<div class="a" style="left:713px;top:267.4px;width:267px;height:246.6px;background:#535353"></div>
<div class="a" style="left:716.3px;top:276.4px;width:64.4px;height:12px;background:#454545;border-radius:1px"></div>
<svg class="a" style="left:721px;top:277.8px" width="10" height="10" viewBox="0 0 10 10"><circle cx="3.9" cy="3.9" r="2.7" fill="none" stroke="#e4e4e4" stroke-width="1.2"/><path d="M5.9 5.9 L8.8 8.8" stroke="#e4e4e4" stroke-width="1.5"/></svg>
<span class="a" style="left:732.4px;top:276.40px;font-size:9.4px;line-height:12.2px;font-weight:normal;color:#f0f0f0;font-family:'Liberation Sans',sans-serif;white-space:nowrap;transform-origin:0 50%;transform:scaleX(0.799);">Kind</span>
<svg class="a" style="left:773px;top:280.3px" width="7" height="5" viewBox="0 0 7 5"><path d="M1 1 L3.5 3.6 L6 1" fill="none" stroke="#cfcfcf" stroke-width="1"/></svg>
<svg class="a" style="left:790.5px;top:277.4px" width="11" height="9" viewBox="0 0 11 9"><rect x="0.7" y="0.7" width="9.6" height="7.6" fill="none" stroke="#e4e4e4" stroke-width="1.1"/><path d="M2.2 6.8 L4.4 3.6 L5.8 5.4 L6.8 4.4 L8.6 6.8 Z" fill="#e4e4e4"/></svg>
<svg class="a" style="left:808.7px;top:277px" width="10" height="10" viewBox="0 0 10 10"><circle cx="5" cy="5" r="4.2" fill="none" stroke="#e4e4e4" stroke-width="1.1"/><path d="M8 2 A4.2 4.2 0 0 1 2 8 Z" fill="#e4e4e4"/></svg>
<span class="a" style="left:827.52px;top:275.35px;width:8.96px;font-family:'Liberation Serif',serif;font-weight:bold;font-size:13.43px;line-height:13.43px;color:#e4e4e4;text-align:center;transform:scaleX(1.16)">T</span>
<svg class="a" style="left:845px;top:276.6px" width="11" height="11" viewBox="0 0 11 11"><rect x="2.4" y="2.4" width="6.2" height="6.2" fill="none" stroke="#e4e4e4" stroke-width="1.2"/><path d="M0.6 2.4 H10.4 M0.6 8.6 H10.4 M2.4 0.6 V10.4 M8.6 0.6 V10.4" stroke="#e4e4e4" stroke-width="0.9"/></svg>
<svg class="a" style="left:865px;top:276.4px" width="10" height="11" viewBox="0 0 10 11"><path d="M3 0.8 H6.4 L9 3.4 V10 H3 Z" fill="none" stroke="#e4e4e4" stroke-width="1.1"/><rect x="0.8" y="5.4" width="4.6" height="4.8" fill="#e4e4e4"/><path d="M6 1 V3.8 H8.8" fill="none" stroke="#e4e4e4" stroke-width="0.9"/></svg>
<div class="a" style="left:883.5px;top:278.5px;width:6px;height:10.5px;background:#474747;border-radius:3px"></div>
<div class="a" style="left:883.2px;top:275.6px;width:6.6px;height:6.6px;background:#dcdcdc;border-radius:50%;border:1px solid #f4f4f4"></div>
<div class="a" style="left:713px;top:292px;width:267px;height:1px;background:#464646"></div>
<div class="a" style="left:716.3px;top:297.6px;width:96.6px;height:12px;background:#454545;border-radius:1px"></div>
<span class="a" style="left:721.7px;top:297.80px;font-size:9.4px;line-height:12.2px;font-weight:normal;color:#f0f0f0;font-family:'Liberation Sans',sans-serif;white-space:nowrap;transform-origin:0 50%;transform:scaleX(0.818);">Normal</span>
<svg class="a" style="left:805px;top:301.6px" width="7" height="5" viewBox="0 0 7 5"><path d="M1 1 L3.5 3.6 L6 1" fill="none" stroke="#cfcfcf" stroke-width="1"/></svg>
<span class="a" style="left:818.9px;top:297.80px;font-size:9.4px;line-height:12.2px;font-weight:normal;color:#e0e0e0;font-family:'Liberation Sans',sans-serif;white-space:nowrap;transform-origin:0 50%;transform:scaleX(0.814);">Opacity:</span>
<div class="a" style="left:851.4px;top:297.8px;width:37px;height:11px;background:#454545"></div><div class="a" style="left:877.4px;top:297.8px;width:1px;height:11px;background:#565656"></div>
<span class="a" style="left:854.3px;top:297.80px;font-size:9.4px;line-height:12.2px;font-weight:normal;color:#f4f4f4;font-family:'Liberation Sans',sans-serif;white-space:nowrap;transform-origin:0 50%;transform:scaleX(0.822);">100%</span>
<svg class="a" style="left:879.6px;top:301.4px" width="7" height="5" viewBox="0 0 7 5"><path d="M1 1 L3.5 3.6 L6 1" fill="none" stroke="#cfcfcf" stroke-width="1"/></svg>
<div class="a" style="left:713px;top:313.8px;width:267px;height:1px;background:#464646"></div>
<span class="a" style="left:717.1px;top:318.80px;font-size:9.4px;line-height:12.2px;font-weight:normal;color:#e0e0e0;font-family:'Liberation Sans',sans-serif;white-space:nowrap;transform-origin:0 50%;transform:scaleX(0.857);">Lock:</span>
<svg class="a" style="left:742px;top:320px" width="10" height="10" viewBox="0 0 10 10"><rect x="0.5" y="0.5" width="9" height="9" fill="none" stroke="#9a9a9a" stroke-width="0.9"/><rect x="1.6" y="1.6" width="2.2" height="2.2" fill="#cfcfcf"/><rect x="6.2" y="1.6" width="2.2" height="2.2" fill="#cfcfcf"/><rect x="3.9" y="3.9" width="2.2" height="2.2" fill="#cfcfcf"/><rect x="1.6" y="6.2" width="2.2" height="2.2" fill="#cfcfcf"/><rect x="6.2" y="6.2" width="2.2" height="2.2" fill="#cfcfcf"/></svg>
<svg class="a" style="left:758.5px;top:319px" width="11" height="12" viewBox="0 0 11 12"><path d="M10.4 0.6 C8 2.6 5.6 5.2 4.2 7.2 L6.2 8.8 C7.8 6.6 9.8 3.6 10.4 0.6 Z" fill="#a4a4a4"/><path d="M3.6 7.8 L5.6 9.4 C4.8 11.2 2.8 11.8 0.8 11.2 C2.2 10.6 2.4 9 3.6 7.8 Z" fill="#a4a4a4"/></svg>
<svg class="a" style="left:774.5px;top:319.2px" width="11" height="11" viewBox="0 0 11 11"><path d="M5.5 1.8 V9.2 M1.8 5.5 H9.2" stroke="#e4e4e4" stroke-width="1.2"/><path d="M5.5 0.2 L7.4 2.6 H3.6 Z M5.5 10.8 L3.6 8.4 H7.4 Z M0.2 5.5 L2.6 3.6 V7.4 Z M10.8 5.5 L8.4 7.4 V3.6 Z" fill="#e4e4e4"/></svg>
<svg class="a" style="left:791.5px;top:319.4px" width="12" height="11" viewBox="0 0 12 11"><path d="M2.8 0.4 V8.2 H11.6 M0.4 2.6 H7" fill="none" stroke="#e4e4e4" stroke-width="1.1"/><path d="M9 2.4 V3.6 M9 5 V6.2 M4.6 10.4 H3.4" stroke="#e4e4e4" stroke-width="1.1"/><path d="M7.6 2.6 H9.4 V10.6" fill="none" stroke="#e4e4e4" stroke-width="1.1" stroke-dasharray="1.4 1"/></svg>
<svg class="a" style="left:809px;top:319px" width="10" height="10.6" viewBox="0 0 10 12"><rect x="0.8" y="5" width="8.4" height="6.4" rx="0.6" fill="#e4e4e4"/><path d="M2.6 5 V3.4 A2.4 2.4 0 0 1 7.4 3.4 V5" fill="none" stroke="#e4e4e4" stroke-width="1.3"/><rect x="4.4" y="7.2" width="1.2" height="2.2" fill="#535353"/></svg>
<span class="a" style="left:836.7px;top:318.80px;font-size:9.4px;line-height:12.2px;font-weight:normal;color:#e0e0e0;font-family:'Liberation Sans',sans-serif;white-space:nowrap;transform-origin:0 50%;transform:scaleX(0.754);">Fill:</span>
<div class="a" style="left:851.4px;top:319.3px;width:37px;height:11px;background:#454545"></div><div class="a" style="left:877.4px;top:319.3px;width:1px;height:11px;background:#565656"></div>
<span class="a" style="left:854.3px;top:319.10px;font-size:9.4px;line-height:12.2px;font-weight:normal;color:#f4f4f4;font-family:'Liberation Sans',sans-serif;white-space:nowrap;transform-origin:0 50%;transform:scaleX(0.822);">100%</span>
<svg class="a" style="left:879.6px;top:322.8px" width="7" height="5" viewBox="0 0 7 5"><path d="M1 1 L3.5 3.6 L6 1" fill="none" stroke="#cfcfcf" stroke-width="1"/></svg>
<div class="a" style="left:713px;top:336.7px;width:254px;height:156.5px;background:#535353"></div>
<div class="a" style="left:736px;top:336.7px;width:231px;height:30.7px;background:#6a6a6a"></div>
<div class="a" style="left:713px;top:367.2px;width:254px;height:1px;background:#4a4a4a"></div>
<svg class="a" style="left:718.6px;top:349.15px" width="12" height="8" viewBox="0 0 12 8"><path d="M0.4 4 C2.4 0.2 9.6 0.2 11.6 4 C9.6 7.8 2.4 7.8 0.4 4 Z" fill="#f4f4f4"/><circle cx="6" cy="4" r="2.2" fill="#484848"/><circle cx="6" cy="4" r="1" fill="#f4f4f4"/></svg>
<svg class="a" style="left:736.5px;top:338.9px" width="29" height="28" viewBox="0 0 29 28"><path d="M0.6 8 V0.6 H9 M20 0.6 H28.4 V8 M28.4 20 V27.4 H20 M9 27.4 H0.6 V20" fill="none" stroke="#eaeaea" stroke-width="1.1"/></svg>
<span class="a" style="left:746.37px;top:346.28px;width:9.25px;font-family:'Liberation Serif',serif;font-weight:bold;font-size:13.87px;line-height:13.87px;color:#f2f2f2;text-align:center;transform:scaleX(1.16)">T</span>
<span class="a" style="left:770.6px;top:346.65px;font-size:9.4px;line-height:12.2px;font-weight:normal;color:#f2f2f2;font-family:'Liberation Sans',sans-serif;white-space:nowrap;transform-origin:0 50%;transform:scaleX(0.841);">Together, we can!</span>
<div class="a" style="left:713px;top:398.5px;width:254px;height:1px;background:#4a4a4a"></div>
<svg class="a" style="left:718.6px;top:380.45px" width="12" height="8" viewBox="0 0 12 8"><path d="M0.4 4 C2.4 0.2 9.6 0.2 11.6 4 C9.6 7.8 2.4 7.8 0.4 4 Z" fill="#f4f4f4"/><circle cx="6" cy="4" r="2.2" fill="#484848"/><circle cx="6" cy="4" r="1" fill="#f4f4f4"/></svg>
<span class="a" style="left:746.37px;top:377.58px;width:9.25px;font-family:'Liberation Serif',serif;font-weight:bold;font-size:13.87px;line-height:13.87px;color:#ececec;text-align:center;transform:scaleX(1.16)">T</span>
<span class="a" style="left:770.6px;top:377.95px;font-size:9.4px;line-height:12.2px;font-weight:normal;color:#f2f2f2;font-family:'Liberation Sans',sans-serif;white-space:nowrap;transform-origin:0 50%;transform:scaleX(0.824);">Editor&rsquo;s Note:</span>
<div class="a" style="left:713px;top:429.8px;width:254px;height:1px;background:#4a4a4a"></div>
<svg class="a" style="left:718.6px;top:411.75px" width="12" height="8" viewBox="0 0 12 8"><path d="M0.4 4 C2.4 0.2 9.6 0.2 11.6 4 C9.6 7.8 2.4 7.8 0.4 4 Z" fill="#f4f4f4"/><circle cx="6" cy="4" r="2.2" fill="#484848"/><circle cx="6" cy="4" r="1" fill="#f4f4f4"/></svg>
<span class="a" style="left:746.37px;top:408.88px;width:9.25px;font-family:'Liberation Serif',serif;font-weight:bold;font-size:13.87px;line-height:13.87px;color:#ececec;text-align:center;transform:scaleX(1.16)">T</span>
<span class="a" style="left:770.6px;top:409.25px;font-size:9.4px;line-height:12.2px;font-weight:normal;color:#f2f2f2;font-family:'Liberation Sans',sans-serif;white-space:nowrap;transform-origin:0 50%;transform:scaleX(0.840);">A similar point is poverty...eloping country, Pakistan,</span>
<div class="a" style="left:713px;top:461.1px;width:254px;height:1px;background:#4a4a4a"></div>
<svg class="a" style="left:718.6px;top:443.05px" width="12" height="8" viewBox="0 0 12 8"><path d="M0.4 4 C2.4 0.2 9.6 0.2 11.6 4 C9.6 7.8 2.4 7.8 0.4 4 Z" fill="#f4f4f4"/><circle cx="6" cy="4" r="2.2" fill="#484848"/><circle cx="6" cy="4" r="1" fill="#f4f4f4"/></svg>
<span class="a" style="left:746.37px;top:440.18px;width:9.25px;font-family:'Liberation Serif',serif;font-weight:bold;font-size:13.87px;line-height:13.87px;color:#ececec;text-align:center;transform:scaleX(1.16)">T</span>
<span class="a" style="left:770.6px;top:440.55px;font-size:9.4px;line-height:12.2px;font-weight:normal;color:#f2f2f2;font-family:'Liberation Sans',sans-serif;white-space:nowrap;transform-origin:0 50%;transform:scaleX(0.817);">(Ms. Hira Asim) hira.8998@beaconite.edu.pk</span>
<div class="a" style="left:713px;top:492.4px;width:254px;height:1px;background:#4a4a4a"></div>
<svg class="a" style="left:718.6px;top:474.34999999999997px" width="12" height="8" viewBox="0 0 12 8"><path d="M0.4 4 C2.4 0.2 9.6 0.2 11.6 4 C9.6 7.8 2.4 7.8 0.4 4 Z" fill="#f4f4f4"/><circle cx="6" cy="4" r="2.2" fill="#484848"/><circle cx="6" cy="4" r="1" fill="#f4f4f4"/></svg>
<span class="a" style="left:746.37px;top:471.48px;width:9.25px;font-family:'Liberation Serif',serif;font-weight:bold;font-size:13.87px;line-height:13.87px;color:#ececec;text-align:center;transform:scaleX(1.16)">T</span>
<span class="a" style="left:770.6px;top:471.85px;font-size:9.4px;line-height:12.2px;font-weight:normal;color:#f2f2f2;font-family:'Liberation Sans',sans-serif;white-space:nowrap;transform-origin:0 50%;transform:scaleX(0.805);">Hira Asim</span>
<div class="a" style="left:736px;top:336.7px;width:1px;height:156.5px;background:#4c4c4c"></div>
<div class="a" style="left:967px;top:336.7px;width:13px;height:156.5px;background:#4d4d4d"></div>
<div class="a" style="left:968.8px;top:350px;width:8px;height:47.5px;background:#6a6a6a;border-radius:1px"></div>
<svg class="a" style="left:969.3px;top:341.5px" width="7" height="5" viewBox="0 0 7 5"><path d="M1 4 L3.5 1.4 L6 4" fill="none" stroke="#8a8a8a" stroke-width="1"/></svg>
<svg class="a" style="left:969.3px;top:483.5px" width="7" height="5" viewBox="0 0 7 5"><path d="M1 1 L3.5 3.6 L6 1" fill="none" stroke="#8a8a8a" stroke-width="1"/></svg>
<div class="a" style="left:713px;top:493.2px;width:267px;height:1px;background:#454545"></div>
<svg class="a" style="left:822px;top:500.2px" width="12" height="7" viewBox="0 0 12 7"><rect x="0.7" y="1.2" width="5.6" height="4.6" rx="2.3" fill="none" stroke="#8a8a8a" stroke-width="1.1"/><rect x="5.7" y="1.2" width="5.6" height="4.6" rx="2.3" fill="none" stroke="#8a8a8a" stroke-width="1.1"/></svg>
<span class="a" style="left:844.5px;top:496.55px;font-size:10.5px;line-height:13.7px;font-weight:normal;color:#e2e2e2;font-family:'Liberation Sans',sans-serif;white-space:nowrap;transform-origin:0 50%;transform:scaleX(0.980);font-style:italic;">fx</span>
<svg class="a" style="left:853px;top:506.7px" width="4" height="3" viewBox="0 0 4 3"><path d="M0 0 H4 L2 3 Z" fill="#e2e2e2"/></svg>
<svg class="a" style="left:864.5px;top:498.7px" width="11" height="9" viewBox="0 0 11 9"><rect x="0" y="0" width="11" height="9" rx="0.8" fill="#e2e2e2"/><circle cx="5.5" cy="4.5" r="2.5" fill="#4a4a4a"/></svg>
<svg class="a" style="left:885.5px;top:498.7px" width="12" height="11" viewBox="0 0 12 11"><circle cx="5" cy="5" r="4.2" fill="none" stroke="#e2e2e2" stroke-width="1.1"/><path d="M8 2 A4.2 4.2 0 0 1 2 8 Z" fill="#e2e2e2"/><path d="M9 8.4 H12 L10.5 10.6 Z" fill="#e2e2e2"/></svg>
<svg class="a" style="left:906px;top:499.2px" width="11" height="9" viewBox="0 0 11 9"><path d="M0.4 1 H4 L5.2 2.2 H10.6 V8.6 H0.4 Z" fill="#e2e2e2"/></svg>
<svg class="a" style="left:927.5px;top:498.7px" width="10" height="10" viewBox="0 0 10 10"><rect x="0.7" y="0.7" width="8.6" height="8.6" fill="none" stroke="#e2e2e2" stroke-width="1.2"/><path d="M5 2.8 V7.2 M2.8 5 H7.2" stroke="#e2e2e2" stroke-width="1.2"/></svg>
<svg class="a" style="left:947.5px;top:498.2px" width="10" height="11" viewBox="0 0 10 11"><path d="M0.6 2.4 H9.4 M3.4 2.2 V0.8 H6.6 V2.2" fill="none" stroke="#e2e2e2" stroke-width="1.1"/><path d="M1.4 3.4 H8.6 V10.4 H1.4 Z" fill="#e2e2e2"/><path d="M3.6 4.6 V9.2 M5 4.6 V9.2 M6.4 4.6 V9.2" stroke="#535353" stroke-width="0.7"/></svg>
<div class="a" style="left:0;top:513.5px;width:980px;height:5.5px;background:#2a2d2a"></div>
</div>
</body></html>
